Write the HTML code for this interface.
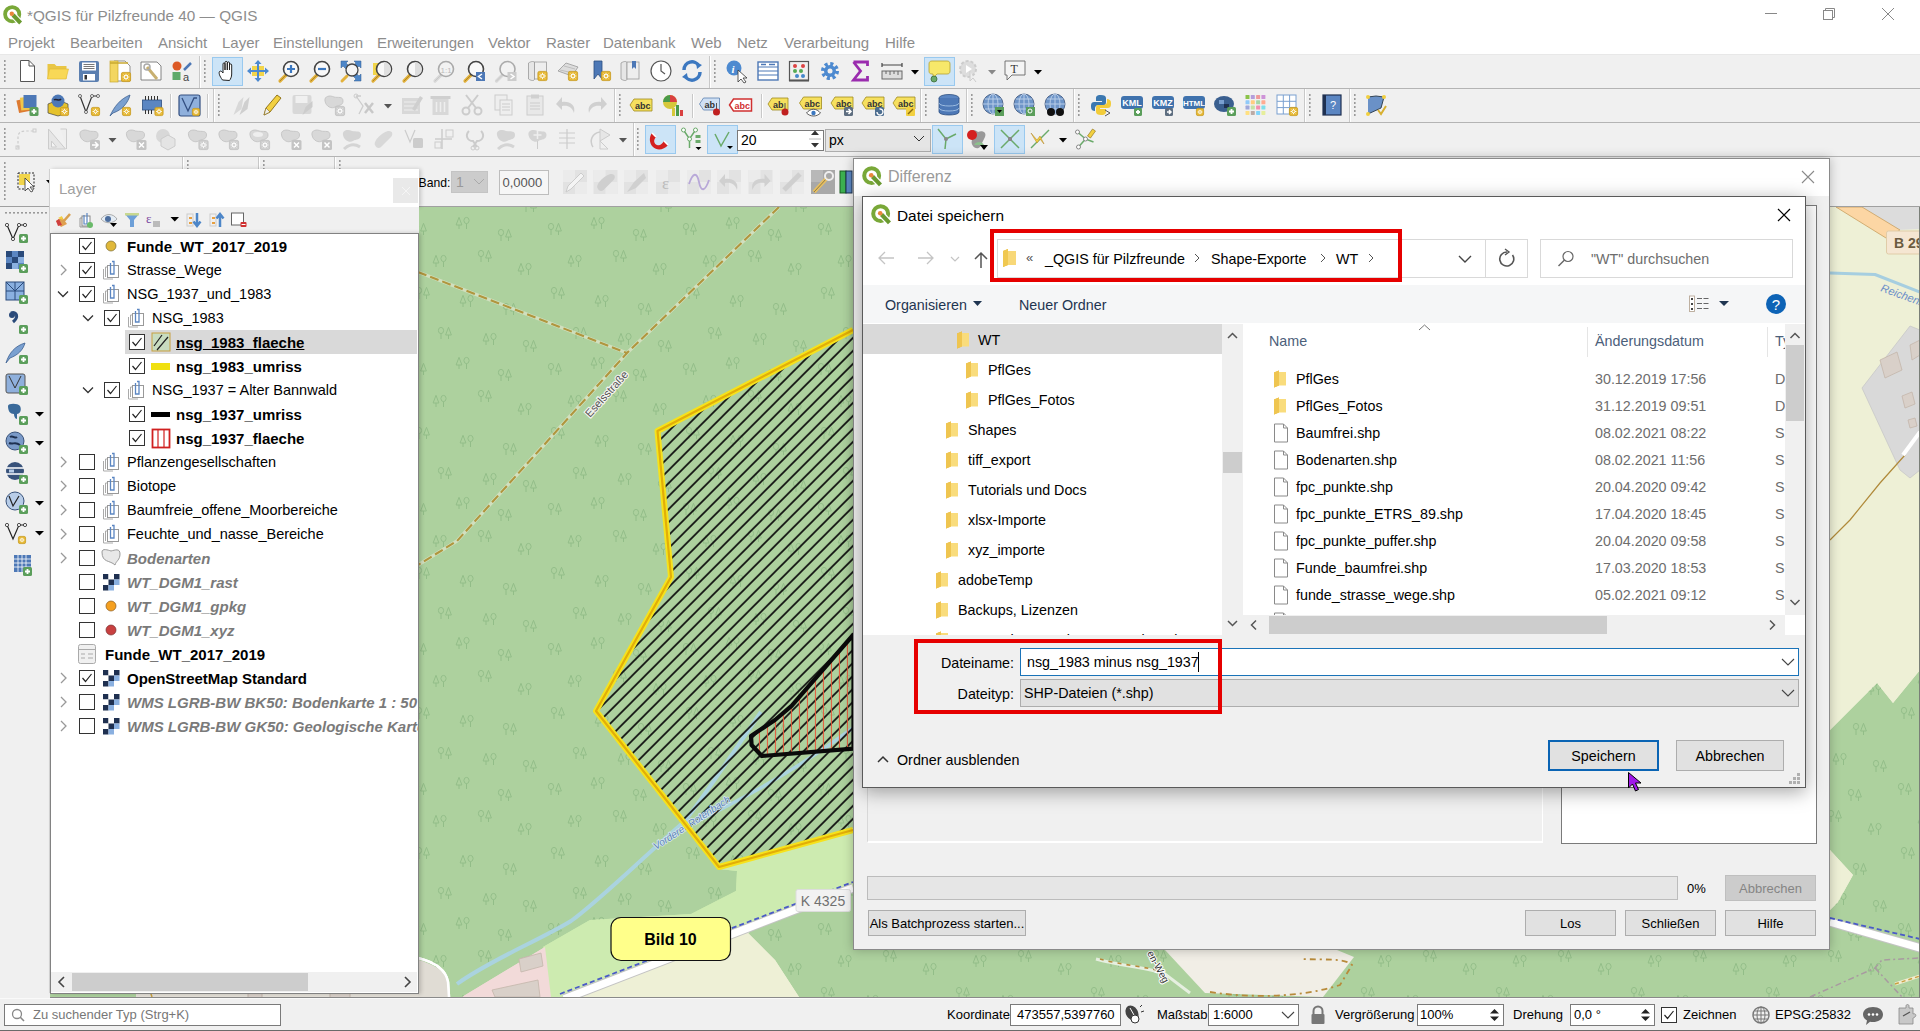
<!DOCTYPE html><html><head><meta charset="utf-8"><style>
html,body{margin:0;padding:0;} body{width:1920px;height:1031px;position:relative;overflow:hidden;background:#f0f0f0;font-family:"Liberation Sans", sans-serif;}
</style></head><body>
<div style="position:absolute;left:0px;top:0px;width:1920px;height:54px;background:#fff;"></div>
<svg style="position:absolute;left:3px;top:5px;" width="20" height="20" viewBox="0 0 20 20"><circle cx="9.200000000000001" cy="9.200000000000001" r="7.1" fill="none" stroke="#79a838" stroke-width="3.8"/><path d="M10.4 10.4 L17.2 17.6" stroke="#fff" stroke-width="6.4" stroke-linecap="butt"/><path d="M10.0 10.0 L17.6 18.0" stroke="#6a9a30" stroke-width="4.0" stroke-linecap="butt"/><circle cx="8.8" cy="8.8" r="2.2" fill="#e8863a"/></svg>
<div style="position:absolute;top:5.5px;font-size:15.3px;line-height:19px;color:#8d8d8d;white-space:nowrap;left:27px;">*QGIS für Pilzfreunde 40 — QGIS</div>
<svg style="position:absolute;left:1760px;top:0px;" width="160" height="30" viewBox="0 0 160 30"><path d="M5 13.5 H17" stroke="#888" stroke-width="1"/><rect x="63.5" y="10.5" width="9" height="9" fill="none" stroke="#888"/><path d="M65.5 10.5 V8.5 H74.5 V17.5 H72.5" fill="none" stroke="#888"/><path d="M122 8 L134 20 M134 8 L122 20" stroke="#888" stroke-width="1"/></svg>
<div style="position:absolute;top:32.5px;font-size:15px;line-height:19px;color:#8d8d8d;white-space:nowrap;left:8px;">Projekt</div>
<div style="position:absolute;top:32.5px;font-size:15px;line-height:19px;color:#8d8d8d;white-space:nowrap;left:70px;">Bearbeiten</div>
<div style="position:absolute;top:32.5px;font-size:15px;line-height:19px;color:#8d8d8d;white-space:nowrap;left:158px;">Ansicht</div>
<div style="position:absolute;top:32.5px;font-size:15px;line-height:19px;color:#8d8d8d;white-space:nowrap;left:222px;">Layer</div>
<div style="position:absolute;top:32.5px;font-size:15px;line-height:19px;color:#8d8d8d;white-space:nowrap;left:273px;">Einstellungen</div>
<div style="position:absolute;top:32.5px;font-size:15px;line-height:19px;color:#8d8d8d;white-space:nowrap;left:377px;">Erweiterungen</div>
<div style="position:absolute;top:32.5px;font-size:15px;line-height:19px;color:#8d8d8d;white-space:nowrap;left:488px;">Vektor</div>
<div style="position:absolute;top:32.5px;font-size:15px;line-height:19px;color:#8d8d8d;white-space:nowrap;left:546px;">Raster</div>
<div style="position:absolute;top:32.5px;font-size:15px;line-height:19px;color:#8d8d8d;white-space:nowrap;left:603px;">Datenbank</div>
<div style="position:absolute;top:32.5px;font-size:15px;line-height:19px;color:#8d8d8d;white-space:nowrap;left:691px;">Web</div>
<div style="position:absolute;top:32.5px;font-size:15px;line-height:19px;color:#8d8d8d;white-space:nowrap;left:737px;">Netz</div>
<div style="position:absolute;top:32.5px;font-size:15px;line-height:19px;color:#8d8d8d;white-space:nowrap;left:784px;">Verarbeitung</div>
<div style="position:absolute;top:32.5px;font-size:15px;line-height:19px;color:#8d8d8d;white-space:nowrap;left:885px;">Hilfe</div>
<div style="position:absolute;left:0px;top:54px;width:1920px;height:1px;background:#e8e8e8;"></div>
<div style="position:absolute;left:0px;top:88px;width:1920px;height:1px;background:#b4b4b4;"></div>
<div style="position:absolute;left:0px;top:122px;width:1920px;height:1px;background:#b4b4b4;"></div>
<div style="position:absolute;left:0px;top:156px;width:1920px;height:1px;background:#b4b4b4;"></div>
<div style="position:absolute;left:0px;top:206px;width:1920px;height:1px;background:#a0a0a0;"></div>
<svg style="position:absolute;left:0;top:0" width="1920" height="207" viewBox="0 0 1920 207"><rect x="4" y="60" width="1.6" height="2" fill="#9a9a9a"/><rect x="4" y="64" width="1.6" height="2" fill="#9a9a9a"/><rect x="4" y="68" width="1.6" height="2" fill="#9a9a9a"/><rect x="4" y="72" width="1.6" height="2" fill="#9a9a9a"/><rect x="4" y="76" width="1.6" height="2" fill="#9a9a9a"/><rect x="4" y="80" width="1.6" height="2" fill="#9a9a9a"/><g transform="translate(15,59) scale(1.0)"><path d="M5.5 1.5 H14 L19.5 7 V22.5 H5.5 Z" fill="#fff" stroke="#555"/><path d="M14 1.5 V7 H19.5" fill="none" stroke="#555"/></g><g transform="translate(45.5,59) scale(1.0)"><path d="M2 5 H9 L11 7 H21 V20 H2 Z" fill="#e9c645"/><path d="M4 10 H23 L20.5 20 H2 Z" fill="#f8d857" stroke="#e0b830" stroke-width="0.6"/></g><g transform="translate(77,59) scale(1.0)"><rect x="2" y="2" width="20" height="21" rx="2" fill="#5b7fb0"/><rect x="5" y="3.5" width="14" height="8" fill="#fff"/><path d="M6.5 5.5 H17.5 M6.5 7.5 H17.5 M6.5 9.5 H17.5" stroke="#555" stroke-width="0.8"/><rect x="6" y="15" width="12" height="6.5" fill="#fff"/><rect x="7.5" y="16" width="2.5" height="4.5" fill="#333"/></g><g transform="translate(108,59) scale(1.0)"><path d="M6 2 H17 L22 7 V22 H6 Z" fill="#fff" stroke="#777" stroke-width="0.8"/><rect x="2" y="2" width="8" height="21" fill="#f3d660" stroke="#c8a830" stroke-width="0.7"/><path d="M2 4 H20" stroke="#c8a830" stroke-width="1.5"/><rect x="13.4" y="13.4" width="9.2" height="9.2" rx="1.5" fill="#e6b833" stroke="#c89a20" stroke-width="0.8"/><path d="M18.0 14.8 V21.2 M14.6 18.0 H21.4 M15.7 15.7 L20.3 20.3 M20.3 15.7 L15.7 20.3" stroke="#fff" stroke-width="0.9"/><circle cx="18.0" cy="18.0" r="1.6" fill="#e6b833"/><circle cx="18.0" cy="18.0" r="1.6" fill="none" stroke="#fff" stroke-width="0.8"/></g><g transform="translate(139,59) scale(1.0)"><path d="M2 3 H18 L22 7 V21 H2 Z" fill="#fff" stroke="#777" stroke-width="0.9"/><path d="M8 8 L18 20" stroke="#c8b070" stroke-width="3"/><circle cx="8" cy="8" r="3" fill="none" stroke="#aaa" stroke-width="1.5"/></g><g transform="translate(170,59) scale(1.0)"><circle cx="7" cy="7" r="4.5" fill="#dd5a25"/><rect x="2.5" y="13" width="8" height="8" fill="#5eaa6a"/><path d="M14 11 L21 4" stroke="#4d78b6" stroke-width="2.5"/><text x="13" y="22" font-size="11" font-family="Liberation Sans" fill="#444">a</text></g><rect x="199" y="56" width="1" height="32" fill="#c8c8c8"/><rect x="200" y="56" width="1" height="32" fill="#fff"/><rect x="204" y="60" width="1.6" height="2" fill="#9a9a9a"/><rect x="204" y="64" width="1.6" height="2" fill="#9a9a9a"/><rect x="204" y="68" width="1.6" height="2" fill="#9a9a9a"/><rect x="204" y="72" width="1.6" height="2" fill="#9a9a9a"/><rect x="204" y="76" width="1.6" height="2" fill="#9a9a9a"/><rect x="204" y="80" width="1.6" height="2" fill="#9a9a9a"/><rect x="212.5" y="57.5" width="30" height="28" fill="#cce4f7" stroke="#99c9ef"/><g transform="translate(215.5,59) scale(1.0)"><path d="M7 21 C4 17 3 14 4 12.5 C5 11.5 6.5 12.5 7.5 14 V5 C7.5 3.5 9.5 3.5 9.5 5 V11 V3.5 C9.5 2 11.8 2 11.8 3.5 V11 V4 C11.8 2.5 14 2.5 14 4 V11 V6 C14 4.6 16.2 4.6 16.2 6 V15 C16.2 18 15 20 14 21.5 Z" fill="#fff" stroke="#222" stroke-width="1"/></g><g transform="translate(246,59) scale(1.0)"><rect x="6" y="7" width="12" height="10" fill="#f2d54a"/><path d="M12 1 L15.5 5 H8.5 Z M12 23 L15.5 19 H8.5 Z M1 12 L5 8.5 V15.5 Z M23 12 L19 8.5 V15.5 Z" fill="#4d8ad0"/><path d="M12 4 V20 M4 12 H20" stroke="#4d8ad0" stroke-width="2"/></g><g transform="translate(277,59) scale(1.0)"><path d="M3 22 L9 16" stroke="#e3b23c" stroke-width="3.2" stroke-linecap="round"/><path d="M3 22 L9 16" stroke="#8a6a1a" stroke-width="0.6" stroke-linecap="round" fill="none"/><circle cx="14" cy="10" r="7.5" fill="#f8f8f8" stroke="#444" stroke-width="1.6"/><path d="M14 6 V14 M10 10 H18" stroke="#3c78c0" stroke-width="2.2"/></g><g transform="translate(308,59) scale(1.0)"><path d="M3 22 L9 16" stroke="#e3b23c" stroke-width="3.2" stroke-linecap="round"/><path d="M3 22 L9 16" stroke="#8a6a1a" stroke-width="0.6" stroke-linecap="round" fill="none"/><circle cx="14" cy="10" r="7.5" fill="#f8f8f8" stroke="#444" stroke-width="1.6"/><path d="M10 10 H18" stroke="#3c78c0" stroke-width="2.2"/></g><g transform="translate(339,59) scale(1.0)"><path d="M2 2 H9 L7 4 L10 7 L7 10 L4 7 L2 9 Z M22 2 V9 L20 7 L17 10 L14 7 L17 4 L15 2 Z M22 22 H15 L17 20 L14 17 L17 14 L20 17 L22 15 Z" fill="#4d86c8" stroke="#2d5a90" stroke-width="0.5"/><path d="M3 22 L8 17" stroke="#e3b23c" stroke-width="3" stroke-linecap="round"/><circle cx="13" cy="11" r="6" fill="#f4f4f4" stroke="#444" stroke-width="1.3"/></g><g transform="translate(370,59) scale(1.0)"><rect x="3" y="4" width="11" height="12" fill="#f2d54a"/><path d="M3 22 L9 16" stroke="#e3b23c" stroke-width="3.2" stroke-linecap="round"/><path d="M3 22 L9 16" stroke="#8a6a1a" stroke-width="0.6" stroke-linecap="round" fill="none"/><circle cx="14" cy="10" r="7.5" fill="#f8f8f8" stroke="#444" stroke-width="1.6"/><path d="M14 3 A7 7 0 0 1 14 17" fill="#e0e0e0"/></g><g transform="translate(401,59) scale(1.0)"><path d="M3 22 L9 16" stroke="#e3b23c" stroke-width="3.2" stroke-linecap="round"/><path d="M3 22 L9 16" stroke="#8a6a1a" stroke-width="0.6" stroke-linecap="round" fill="none"/><circle cx="14" cy="10" r="7.5" fill="#f8f8f8" stroke="#444" stroke-width="1.6"/><path d="M14 3 A7 7 0 0 1 14 17" fill="#ddd"/></g><g transform="translate(432,59) scale(1.0)"><path d="M3 22 L9 16" stroke="#d8d8d8" stroke-width="3.2" stroke-linecap="round"/><path d="M3 22 L9 16" stroke="#bbb" stroke-width="0.6" stroke-linecap="round" fill="none"/><circle cx="14" cy="10" r="7.5" fill="#f2f2f2" stroke="#aaa" stroke-width="1.6"/><text x="8.5" y="13.5" font-size="8" font-family="Liberation Sans" fill="#bbb">1:1</text></g><g transform="translate(462,59) scale(1.0)"><path d="M3 22 L9 16" stroke="#e3b23c" stroke-width="3.2" stroke-linecap="round"/><path d="M3 22 L9 16" stroke="#8a6a1a" stroke-width="0.6" stroke-linecap="round" fill="none"/><circle cx="14" cy="10" r="7.5" fill="#f8f8f8" stroke="#444" stroke-width="1.6"/><rect x="14" y="13" width="9" height="9" fill="#4d78b6"/><path d="M20 15 L16.5 17.5 L20 20" stroke="#fff" stroke-width="1.5" fill="none"/></g><g transform="translate(493.5,59) scale(1.0)"><path d="M3 22 L9 16" stroke="#d8d8d8" stroke-width="3.2" stroke-linecap="round"/><path d="M3 22 L9 16" stroke="#bbb" stroke-width="0.6" stroke-linecap="round" fill="none"/><circle cx="14" cy="10" r="7.5" fill="#f2f2f2" stroke="#aaa" stroke-width="1.6"/><rect x="14" y="13" width="9" height="9" fill="#ccc"/><path d="M17 15 L20.5 17.5 L17 20" stroke="#fff" stroke-width="1.5" fill="none"/></g><g transform="translate(525.5,59) scale(1.0)"><path d="M3 4 C6 2 9 2 9 4 V20 C9 22 6 22 3 20 Z" fill="#e6e6e6" stroke="#999" stroke-width="0.8"/><rect x="9" y="3" width="12" height="17" fill="#eee" stroke="#999" stroke-width="0.8"/><rect x="12.4" y="12.4" width="9.2" height="9.2" rx="1.5" fill="#e6b833" stroke="#c89a20" stroke-width="0.8"/><path d="M17.0 13.8 V20.2 M13.6 17.0 H20.4 M14.7 14.7 L19.3 19.3 M19.3 14.7 L14.7 19.3" stroke="#fff" stroke-width="0.9"/><circle cx="17.0" cy="17.0" r="1.6" fill="#e6b833"/><circle cx="17.0" cy="17.0" r="1.6" fill="none" stroke="#fff" stroke-width="0.8"/></g><g transform="translate(556,59) scale(1.0)"><path d="M2 12 L10 4 L22 8 L16 17 Z" fill="#ddd" stroke="#999" stroke-width="0.8"/><path d="M4 11 L17 14 M8 7 L19 10" stroke="#aaa" stroke-width="0.6"/><rect x="12.4" y="12.4" width="9.2" height="9.2" rx="1.5" fill="#e6b833" stroke="#c89a20" stroke-width="0.8"/><path d="M17.0 13.8 V20.2 M13.6 17.0 H20.4 M14.7 14.7 L19.3 19.3 M19.3 14.7 L14.7 19.3" stroke="#fff" stroke-width="0.9"/><circle cx="17.0" cy="17.0" r="1.6" fill="#e6b833"/><circle cx="17.0" cy="17.0" r="1.6" fill="none" stroke="#fff" stroke-width="0.8"/></g><g transform="translate(589,59) scale(1.0)"><path d="M5 2 H13 V20 L9 15 L5 20 Z" fill="#4d78b6" stroke="#2c4f80" stroke-width="0.8"/><rect x="12.4" y="12.4" width="9.2" height="9.2" rx="1.5" fill="#e6b833" stroke="#c89a20" stroke-width="0.8"/><path d="M17.0 13.8 V20.2 M13.6 17.0 H20.4 M14.7 14.7 L19.3 19.3 M19.3 14.7 L14.7 19.3" stroke="#fff" stroke-width="0.9"/><circle cx="17.0" cy="17.0" r="1.6" fill="#e6b833"/><circle cx="17.0" cy="17.0" r="1.6" fill="none" stroke="#fff" stroke-width="0.8"/></g><g transform="translate(618,59) scale(1.0)"><path d="M3 4 C6 2 9 2 9 4 V20 C9 22 6 22 3 20 Z" fill="#e6e6e6" stroke="#999" stroke-width="0.8"/><rect x="9" y="3" width="12" height="17" fill="#eee" stroke="#999" stroke-width="0.8"/><path d="M14 2 H18 V10 L16 8 L14 10 Z" fill="#4d78b6"/></g><g transform="translate(649,59) scale(1.0)"><circle cx="12" cy="12" r="10" fill="#fff" stroke="#555" stroke-width="1.2"/><path d="M12 5 V12 L16 15" stroke="#555" stroke-width="1.2" fill="none"/></g><g transform="translate(680,59) scale(1.0)"><path d="M4 11 A8 8 0 0 1 19 7" stroke="#3c78c0" stroke-width="3.5" fill="none"/><path d="M20 13 A8 8 0 0 1 5 17" stroke="#3c78c0" stroke-width="3.5" fill="none"/><path d="M16 3 L22 6 L17 10 Z M8 21 L2 18 L7 14 Z" fill="#3c78c0"/></g><rect x="709" y="56" width="1" height="32" fill="#c8c8c8"/><rect x="710" y="56" width="1" height="32" fill="#fff"/><rect x="714" y="60" width="1.6" height="2" fill="#9a9a9a"/><rect x="714" y="64" width="1.6" height="2" fill="#9a9a9a"/><rect x="714" y="68" width="1.6" height="2" fill="#9a9a9a"/><rect x="714" y="72" width="1.6" height="2" fill="#9a9a9a"/><rect x="714" y="76" width="1.6" height="2" fill="#9a9a9a"/><rect x="714" y="80" width="1.6" height="2" fill="#9a9a9a"/><rect x="924.5" y="57.5" width="30" height="28" fill="#cce4f7" stroke="#99c9ef"/><g transform="translate(725,59) scale(1.0)"><circle cx="9" cy="9" r="7.5" fill="#4d8ad0"/><text x="6.5" y="13.5" font-size="11" font-weight="bold" font-style="italic" font-family="Liberation Serif" fill="#fff">i</text><path d="M13 11 L13 23 L16 20 L19 24 L21 23 L18 19 L22 19 Z" fill="#fff" stroke="#333" stroke-width="0.8"/></g><g transform="translate(756,59) scale(1.0)"><rect x="2" y="3" width="20" height="18" fill="#fff" stroke="#4d78b6" stroke-width="1.4"/><path d="M2 8 H22 M2 12 H22 M2 16 H22" stroke="#4d78b6" stroke-width="1"/><path d="M5 5.5 H10 M13 5.5 H19" stroke="#4d78b6" stroke-width="1.5"/></g><g transform="translate(787,59) scale(1.0)"><rect x="2.5" y="2.5" width="19" height="19" fill="none" stroke="#555" stroke-width="1.2"/><path d="M2 21.5 H22" stroke="#555" stroke-width="2"/><circle cx="8" cy="7" r="2" fill="#d44"/><circle cx="16" cy="7" r="2" fill="#d44"/><circle cx="8" cy="12" r="2" fill="#5a5"/><circle cx="14" cy="12" r="2" fill="#5a5"/><circle cx="10" cy="17" r="2" fill="#48c"/><circle cx="16" cy="17" r="2" fill="#48c"/></g><g transform="translate(818,59) scale(1.0)"><circle cx="12" cy="12" r="7" fill="none" stroke="#4d8ad0" stroke-width="4" stroke-dasharray="3 2.5"/><circle cx="12" cy="12" r="6" fill="#4d8ad0"/><circle cx="12" cy="12" r="2.5" fill="#f0f0f0"/></g><g transform="translate(848.5,59) scale(1.0)"><path d="M5 3 H19 V7 M19 3 M5 3 L12 12 L5 21 H19 V17" stroke="#9a2cae" stroke-width="2.8" fill="none"/></g><g transform="translate(880,59) scale(1.0)"><path d="M2 6 H22 M2 4 V8 M22 4 V8" stroke="#444" stroke-width="1.2"/><rect x="2" y="12" width="20" height="8" fill="#ddd" stroke="#666" stroke-width="1"/><path d="M6 12 V15 M10 12 V16 M14 12 V15 M18 12 V16" stroke="#666"/></g><g transform="translate(927,59) scale(1.0)"><path d="M2 5 C2 3 3 2 5 2 H20 C22 2 23 3 23 5 V12 C23 14 22 15 20 15 H10 L6 19 V15 H5 C3 15 2 14 2 12 Z" fill="#f7e86a" stroke="#b6a130" stroke-width="0.8"/><circle cx="7" cy="20" r="3" fill="#6aaa6a" stroke="#3a6a3a" stroke-width="0.8"/></g><g transform="translate(958,59) scale(1.0)"><circle cx="10" cy="10" r="8" fill="#ddd" stroke="#ccc" stroke-width="2" stroke-dasharray="3 2"/><path d="M8 6 L14 10 L8 14 Z" fill="#fff"/><path d="M12 12 L12 22 L15 19 L18 23" stroke="#ccc" fill="#eee"/></g><g transform="translate(1003,59) scale(1.0)"><path d="M2 2 H22 V16 H9 L4 21 V16 H2 Z" fill="#f4f4f4" stroke="#666" stroke-width="0.9"/><text x="7.5" y="13.5" font-size="12" font-family="Liberation Serif" fill="#333">T</text></g><path d="M911 70 H919 L915 74.5 Z" fill="#000"/><path d="M988 70 H996 L992 74.5 Z" fill="#888"/><path d="M1034 70 H1042 L1038 74.5 Z" fill="#000"/><rect x="4" y="94" width="1.6" height="2" fill="#9a9a9a"/><rect x="4" y="98" width="1.6" height="2" fill="#9a9a9a"/><rect x="4" y="102" width="1.6" height="2" fill="#9a9a9a"/><rect x="4" y="106" width="1.6" height="2" fill="#9a9a9a"/><rect x="4" y="110" width="1.6" height="2" fill="#9a9a9a"/><rect x="4" y="114" width="1.6" height="2" fill="#9a9a9a"/><g transform="translate(15.5,93) scale(1.0)"><rect x="2" y="6" width="13" height="13" fill="#dd7a30" transform="rotate(-12 8 12)"/><rect x="5" y="4" width="13" height="13" fill="#f0c64a" transform="rotate(-6 11 10)"/><rect x="8" y="2" width="13" height="13" fill="#4d78b6"/><rect x="14" y="14" width="9" height="9" rx="1.5" fill="#5b9e5b"/><path d="M18.5 16 V21 M16 18.5 H21" stroke="#fff" stroke-width="1.8"/></g><g transform="translate(46,93) scale(1.0)"><path d="M2 11 L12 7 L22 11 V20 L12 23 L2 20 Z" fill="#e5c22c" stroke="#444" stroke-width="0.7"/><circle cx="12" cy="8" r="6.5" fill="#4d78b6"/><path d="M8 7 C10 5 13 9 15 6" stroke="#223" stroke-width="1.5" fill="none"/><rect x="14.4" y="14.4" width="8.2" height="8.2" rx="1.5" fill="#e6b833" stroke="#c89a20" stroke-width="0.8"/><path d="M18.5 15.8 V21.2 M15.6 18.5 H21.4 M16.7 16.7 L20.3 20.3 M20.3 16.7 L16.7 20.3" stroke="#fff" stroke-width="0.9"/><circle cx="18.5" cy="18.5" r="1.44" fill="#e6b833"/><circle cx="18.5" cy="18.5" r="1.44" fill="none" stroke="#fff" stroke-width="0.8"/></g><g transform="translate(77,93) scale(1.0)"><path d="M3 3 L9 19 L15 3 L21 3" stroke="#333" stroke-width="1.2" fill="none"/><circle cx="3" cy="3" r="1.5" fill="#fff" stroke="#333" stroke-width="0.7"/><circle cx="9" cy="19" r="1.5" fill="#fff" stroke="#333" stroke-width="0.7"/><circle cx="15" cy="3" r="1.5" fill="#fff" stroke="#333" stroke-width="0.7"/><circle cx="21" cy="3" r="1.5" fill="#fff" stroke="#333" stroke-width="0.7"/><rect x="14.4" y="14.4" width="8.2" height="8.2" rx="1.5" fill="#e6b833" stroke="#c89a20" stroke-width="0.8"/><path d="M18.5 15.8 V21.2 M15.6 18.5 H21.4 M16.7 16.7 L20.3 20.3 M20.3 16.7 L16.7 20.3" stroke="#fff" stroke-width="0.9"/><circle cx="18.5" cy="18.5" r="1.44" fill="#e6b833"/><circle cx="18.5" cy="18.5" r="1.44" fill="none" stroke="#fff" stroke-width="0.8"/></g><g transform="translate(108,93) scale(1.0)"><path d="M2 23 C6 14 12 6 22 2 C20 10 14 17 5 20 Z" fill="#7aa0d0" stroke="#3c5f90" stroke-width="0.8"/><rect x="14.4" y="14.4" width="8.2" height="8.2" rx="1.5" fill="#e6b833" stroke="#c89a20" stroke-width="0.8"/><path d="M18.5 15.8 V21.2 M15.6 18.5 H21.4 M16.7 16.7 L20.3 20.3 M20.3 16.7 L16.7 20.3" stroke="#fff" stroke-width="0.9"/><circle cx="18.5" cy="18.5" r="1.44" fill="#e6b833"/><circle cx="18.5" cy="18.5" r="1.44" fill="none" stroke="#fff" stroke-width="0.8"/></g><g transform="translate(140.5,93) scale(1.0)"><rect x="2" y="7" width="19" height="10" fill="#5b86c2" stroke="#2d4f80" stroke-width="0.8"/><path d="M5 3 V7 M8 3 V7 M11 3 V7 M14 3 V7 M17 3 V7 M5 17 V21 M8 17 V21 M11 17 V21" stroke="#333" stroke-width="1"/><rect x="14.4" y="14.4" width="8.2" height="8.2" rx="1.5" fill="#e6b833" stroke="#c89a20" stroke-width="0.8"/><path d="M18.5 15.8 V21.2 M15.6 18.5 H21.4 M16.7 16.7 L20.3 20.3 M20.3 16.7 L16.7 20.3" stroke="#fff" stroke-width="0.9"/><circle cx="18.5" cy="18.5" r="1.44" fill="#e6b833"/><circle cx="18.5" cy="18.5" r="1.44" fill="none" stroke="#fff" stroke-width="0.8"/></g><g transform="translate(177,93) scale(1.0)"><rect x="2" y="2" width="21" height="21" rx="2" fill="#8fb0dc" stroke="#334f80" stroke-width="1.2"/><path d="M5 5 L11 18 L17 5 L20 5" stroke="#334f80" stroke-width="1.3" fill="none"/><rect x="15.4" y="15.4" width="7.2" height="7.2" rx="1.5" fill="#e6b833" stroke="#c89a20" stroke-width="0.8"/><path d="M19.0 16.8 V21.2 M16.6 19.0 H21.4 M17.7 17.7 L20.3 20.3 M20.3 17.7 L17.7 20.3" stroke="#fff" stroke-width="0.9"/><circle cx="19.0" cy="19.0" r="1.28" fill="#e6b833"/><circle cx="19.0" cy="19.0" r="1.28" fill="none" stroke="#fff" stroke-width="0.8"/></g><rect x="170" y="94" width="1" height="24" fill="#c8c8c8"/><rect x="171" y="94" width="1" height="24" fill="#fff"/><rect x="207" y="94" width="1" height="24" fill="#c8c8c8"/><rect x="208" y="94" width="1" height="24" fill="#fff"/><rect x="213" y="89" width="1" height="33" fill="#c8c8c8"/><rect x="214" y="89" width="1" height="33" fill="#fff"/><rect x="218" y="94" width="1.6" height="2" fill="#9a9a9a"/><rect x="218" y="98" width="1.6" height="2" fill="#9a9a9a"/><rect x="218" y="102" width="1.6" height="2" fill="#9a9a9a"/><rect x="218" y="106" width="1.6" height="2" fill="#9a9a9a"/><rect x="218" y="110" width="1.6" height="2" fill="#9a9a9a"/><rect x="218" y="114" width="1.6" height="2" fill="#9a9a9a"/><g transform="translate(230.5,93) scale(1.0)"><path d="M3 22 L8 9 L13 4 L11 16 Z" fill="#d8d8d8"/><path d="M9 22 L14 9 L19 4 L17 16 Z" fill="#cfcfcf"/></g><g transform="translate(260,93) scale(1.0)"><path d="M4 22 L6 15 L17 2 L21 5 L10 19 Z" fill="#f2d040" stroke="#886a10" stroke-width="0.9"/><path d="M4 22 L6 15 L10 19 Z" fill="#eee" stroke="#886a10" stroke-width="0.6"/></g><g transform="translate(290.5,93) scale(1.0)"><rect x="2" y="2" width="19" height="19" rx="2" fill="#d8d8d8"/><rect x="5" y="3" width="12" height="7" fill="#f0f0f0"/><path d="M12 22 L15 14 L22 8 L22 14 Z" fill="#ccc"/></g><g transform="translate(322,93) scale(1.0)"><path d="M3 8 C2 3 8 2 12 4 C16 5 21 3 21 8 C21 13 16 12 13 14 C10 16 4 14 3 8 Z" fill="#d8d8d8" stroke="#c4c4c4" stroke-width="0.9"/><rect x="13.4" y="13.4" width="9.2" height="9.2" rx="1.5" fill="#cfcfcf" stroke="#c0c0c0" stroke-width="0.8"/><path d="M18.0 14.8 V21.2 M14.6 18.0 H21.4 M15.7 15.7 L20.3 20.3 M20.3 15.7 L15.7 20.3" stroke="#fff" stroke-width="0.9"/><circle cx="18.0" cy="18.0" r="1.6" fill="#cfcfcf"/><circle cx="18.0" cy="18.0" r="1.6" fill="none" stroke="#fff" stroke-width="0.8"/></g><g transform="translate(353,93) scale(1.0)"><path d="M3 3 L10 13 L6 21 M3 3 H8" stroke="#ccc" stroke-width="1.3" fill="none"/><circle cx="3" cy="3" r="2" fill="none" stroke="#ccc"/><path d="M12 10 L20 20 M20 10 L12 20" stroke="#c8c8c8" stroke-width="2.5"/></g><g transform="translate(400,93) scale(1.0)"><rect x="2" y="5" width="18" height="16" fill="#d8d8d8"/><path d="M4 9 H18 M4 13 H18 M4 17 H18" stroke="#eee"/><path d="M12 16 L20 3 L23 5 L15 18 Z" fill="#cfcfcf"/></g><g transform="translate(428.5,93) scale(1.0)"><rect x="4" y="6" width="16" height="16" fill="#d8d8d8"/><rect x="2" y="3" width="20" height="3" fill="#cfcfcf"/><path d="M8 9 V19 M12 9 V19 M16 9 V19" stroke="#eee" stroke-width="1.5"/></g><g transform="translate(460,93) scale(1.0)"><circle cx="6" cy="18" r="3.5" fill="none" stroke="#ccc" stroke-width="2"/><circle cx="18" cy="18" r="3.5" fill="none" stroke="#ccc" stroke-width="2"/><path d="M8 15 L18 2 M16 15 L6 2" stroke="#ccc" stroke-width="2"/></g><g transform="translate(492,93) scale(1.0)"><rect x="3" y="2" width="12" height="15" fill="#eee" stroke="#ccc"/><rect x="8" y="7" width="12" height="15" fill="#eee" stroke="#ccc"/><path d="M10 11 H18 M10 14 H18 M10 17 H18" stroke="#ccc"/></g><g transform="translate(523,93) scale(1.0)"><rect x="4" y="3" width="16" height="19" fill="#e8e8e8" stroke="#ccc"/><rect x="8" y="1.5" width="8" height="4" fill="#d0d0d0"/><path d="M7 10 H17 M7 13 H17 M7 16 H17" stroke="#ccc"/></g><g transform="translate(554,93) scale(1.0)"><path d="M20 20 C22 12 16 8 8 9 V4 L2 11 L8 17 V13 C14 12 18 14 20 20 Z" fill="#d0d0d0"/></g><g transform="translate(585,93) scale(1.0)"><path d="M4 20 C2 12 8 8 16 9 V4 L22 11 L16 17 V13 C10 12 6 14 4 20 Z" fill="#d0d0d0"/></g><path d="M384 104 H392 L388 108.5 Z" fill="#555"/><rect x="614" y="89" width="1" height="33" fill="#c8c8c8"/><rect x="615" y="89" width="1" height="33" fill="#fff"/><rect x="619" y="94" width="1.6" height="2" fill="#9a9a9a"/><rect x="619" y="98" width="1.6" height="2" fill="#9a9a9a"/><rect x="619" y="102" width="1.6" height="2" fill="#9a9a9a"/><rect x="619" y="106" width="1.6" height="2" fill="#9a9a9a"/><rect x="619" y="110" width="1.6" height="2" fill="#9a9a9a"/><rect x="619" y="114" width="1.6" height="2" fill="#9a9a9a"/><g transform="translate(629,93) scale(1.0)"><path d="M1 12 L5 6 H23 V18 H5 Z" fill="#f6e05e" stroke="#a08a20" stroke-width="0.8"/><text x="6" y="15.5" font-size="9" font-weight="bold" font-family="Liberation Sans" fill="#333">abc</text></g><g transform="translate(661,93) scale(1.0)"><circle cx="9" cy="9" r="7" fill="#d6c83a"/><path d="M9 9 L9 2 A7 7 0 0 1 16 9 Z" fill="#d94040"/><path d="M9 9 L2 9 A7 7 0 0 1 9 2 Z" fill="#4a9a4a"/><rect x="11" y="15" width="3" height="8" fill="#d6c83a"/><rect x="15" y="12" width="3" height="11" fill="#4a9a4a"/><rect x="19" y="17" width="3" height="6" fill="#d94040"/></g><g transform="translate(698.5,93) scale(1.0)"><path d="M1 11 L5 5 H21 V17 H5 Z" fill="#cfe0f4" stroke="#5a80b0" stroke-width="0.8"/><text x="6" y="14.5" font-size="9" font-weight="bold" font-family="Liberation Sans" fill="#333">ab</text><path d="M18 10 V17" stroke="#555"/><circle cx="18" cy="19" r="3.5" fill="#c02020"/></g><g transform="translate(728.5,93) scale(1.0)"><path d="M1 12 L5 6 H23 V18 H5 Z" fill="#fff" stroke="#d03030" stroke-width="1.5"/><text x="6" y="15.5" font-size="9" font-weight="bold" font-family="Liberation Sans" fill="#d03030">abc</text></g><g transform="translate(767,93) scale(1.0)"><path d="M1 11 L5 5 H21 V17 H5 Z" fill="#f6e05e" stroke="#a08a20" stroke-width="0.8"/><text x="6" y="14.5" font-size="9" font-weight="bold" font-family="Liberation Sans" fill="#333">ab</text><path d="M18 10 V17" stroke="#555"/><circle cx="18" cy="19" r="3.5" fill="#c02020"/></g><g transform="translate(798.5,93) scale(1.0)"><path d="M1 10 L5 4 H23 V16 H5 Z" fill="#f6e05e" stroke="#a08a20" stroke-width="0.8"/><text x="6" y="13.5" font-size="9" font-weight="bold" font-family="Liberation Sans" fill="#333">abc</text><path d="M8 20 C12 15 18 15 22 20 C18 24 12 24 8 20 Z" fill="#fff" stroke="#333" stroke-width="0.8"/><circle cx="15" cy="20" r="2.2" fill="#3c78c0"/></g><g transform="translate(830,93) scale(1.0)"><path d="M1 10 L5 4 H23 V16 H5 Z" fill="#f6e05e" stroke="#a08a20" stroke-width="0.8"/><text x="6" y="13.5" font-size="9" font-weight="bold" font-family="Liberation Sans" fill="#333">abc</text><rect x="14" y="14" width="9" height="9" rx="1.5" fill="#5e6e80"/><path d="M16 18.5 H21 M18.5 16 L21 18.5 L18.5 21" stroke="#fff" stroke-width="1.5" fill="none"/></g><g transform="translate(861,93) scale(1.0)"><path d="M1 10 L5 4 H23 V16 H5 Z" fill="#f6e05e" stroke="#a08a20" stroke-width="0.8"/><text x="6" y="13.5" font-size="9" font-weight="bold" font-family="Liberation Sans" fill="#333">abc</text><rect x="14" y="14" width="9" height="9" rx="1.5" fill="#4d6e90"/><path d="M16 19 A3 3 0 1 0 18.5 16" stroke="#fff" stroke-width="1.4" fill="none"/></g><g transform="translate(892,93) scale(1.0)"><path d="M1 10 L5 4 H23 V16 H5 Z" fill="#f6e05e" stroke="#a08a20" stroke-width="0.8"/><text x="6" y="13.5" font-size="9" font-weight="bold" font-family="Liberation Sans" fill="#333">abc</text><rect x="14" y="14" width="9" height="9" rx="1" fill="#f2d040"/><path d="M16 21 L21 16" stroke="#886a10" stroke-width="1.5"/></g><rect x="692" y="94" width="1" height="24" fill="#c8c8c8"/><rect x="693" y="94" width="1" height="24" fill="#fff"/><rect x="761" y="94" width="1" height="24" fill="#c8c8c8"/><rect x="762" y="94" width="1" height="24" fill="#fff"/><rect x="920" y="89" width="1" height="33" fill="#c8c8c8"/><rect x="921" y="89" width="1" height="33" fill="#fff"/><rect x="925" y="94" width="1.6" height="2" fill="#9a9a9a"/><rect x="925" y="98" width="1.6" height="2" fill="#9a9a9a"/><rect x="925" y="102" width="1.6" height="2" fill="#9a9a9a"/><rect x="925" y="106" width="1.6" height="2" fill="#9a9a9a"/><rect x="925" y="110" width="1.6" height="2" fill="#9a9a9a"/><rect x="925" y="114" width="1.6" height="2" fill="#9a9a9a"/><g transform="translate(937,93) scale(1.0)"><ellipse cx="12" cy="5" rx="10" ry="3.5" fill="#5b86c2" stroke="#2d4f80" stroke-width="0.8"/><path d="M2 5 V19 C2 23 22 23 22 19 V5" fill="#4d78b6" stroke="#2d4f80" stroke-width="0.8"/><path d="M2 10 C2 14 22 14 22 10 M2 15 C2 19 22 19 22 15" stroke="#9bbbe0" fill="none"/></g><rect x="966" y="89" width="1" height="33" fill="#c8c8c8"/><rect x="967" y="89" width="1" height="33" fill="#fff"/><rect x="971" y="94" width="1.6" height="2" fill="#9a9a9a"/><rect x="971" y="98" width="1.6" height="2" fill="#9a9a9a"/><rect x="971" y="102" width="1.6" height="2" fill="#9a9a9a"/><rect x="971" y="106" width="1.6" height="2" fill="#9a9a9a"/><rect x="971" y="110" width="1.6" height="2" fill="#9a9a9a"/><rect x="971" y="114" width="1.6" height="2" fill="#9a9a9a"/><g transform="translate(982,93) scale(1.0)"><circle cx="11" cy="11" r="10" fill="#6e95c8" stroke="#38527a" stroke-width="0.8"/><path d="M1 11 H21 M11 1 V21 M3 6 H19 M3 16 H19" stroke="#b8cde8" stroke-width="1"/><ellipse cx="11" cy="11" rx="5" ry="10" fill="none" stroke="#b8cde8"/><rect x="13" y="14" width="9" height="9" fill="#5b9e5b"/><path d="M15 17 L17.5 20 L20 17" fill="#000"/></g><g transform="translate(1013,93) scale(1.0)"><circle cx="11" cy="11" r="10" fill="#6e95c8" stroke="#38527a" stroke-width="0.8"/><path d="M1 11 H21 M11 1 V21 M3 6 H19 M3 16 H19" stroke="#b8cde8" stroke-width="1"/><ellipse cx="11" cy="11" rx="5" ry="10" fill="none" stroke="#b8cde8"/><rect x="13" y="14" width="9" height="9" fill="#5b9e5b"/><circle cx="17" cy="18" r="2" fill="none" stroke="#fff"/></g><g transform="translate(1044,93) scale(1.0)"><circle cx="11" cy="11" r="10" fill="#6e95c8" stroke="#38527a" stroke-width="0.8"/><path d="M1 11 H21 M11 1 V21 M3 6 H19 M3 16 H19" stroke="#b8cde8" stroke-width="1"/><ellipse cx="11" cy="11" rx="5" ry="10" fill="none" stroke="#b8cde8"/><circle cx="7" cy="19" r="4" fill="#111"/><circle cx="16" cy="19" r="4" fill="#111"/></g><rect x="1073" y="89" width="1" height="33" fill="#c8c8c8"/><rect x="1074" y="89" width="1" height="33" fill="#fff"/><rect x="1078" y="94" width="1.6" height="2" fill="#9a9a9a"/><rect x="1078" y="98" width="1.6" height="2" fill="#9a9a9a"/><rect x="1078" y="102" width="1.6" height="2" fill="#9a9a9a"/><rect x="1078" y="106" width="1.6" height="2" fill="#9a9a9a"/><rect x="1078" y="110" width="1.6" height="2" fill="#9a9a9a"/><rect x="1078" y="114" width="1.6" height="2" fill="#9a9a9a"/><g transform="translate(1089,93) scale(1.0)"><path d="M12 2 C7 2 7 4 7 6 V8 H13 V9 H5 C2 9 2 12 2 14 C2 17 4 18 6 18 V15 C6 13 8 12 10 12 H15 C17 12 17 10 17 8 V5 C17 3 15 2 12 2 Z" fill="#3b78b0"/><path d="M12 22 C17 22 17 20 17 18 V16 H11 V15 H19 C22 15 22 12 22 10 C22 7 20 6 18 6 V9 C18 11 16 12 14 12 H9 C7 12 7 14 7 16 V19 C7 21 9 22 12 22 Z" fill="#f2cc3a"/><path d="M16 17 L21 20 L16 23" stroke="#555" fill="none"/></g><g transform="translate(1120,93) scale(1.0)"><rect x="1" y="3" width="22" height="13" rx="3" fill="#3f72ad"/><text x="12" y="13" text-anchor="middle" font-size="9" font-weight="bold" font-family="Liberation Sans" fill="#fff">KML</text><rect x="14" y="15" width="8" height="8" rx="1.5" fill="#5b9e5b"/><path d="M18.0 17 V21 M16 19.0 H20" stroke="#fff" stroke-width="1.8"/></g><g transform="translate(1151,93) scale(1.0)"><rect x="1" y="3" width="22" height="13" rx="3" fill="#3f72ad"/><text x="12" y="13" text-anchor="middle" font-size="9" font-weight="bold" font-family="Liberation Sans" fill="#fff">KMZ</text><rect x="14" y="15" width="8" height="8" rx="1.5" fill="#5e6e80"/><path d="M16 19.0 H20 M18.0 17 L20 19.0 L18.0 21" stroke="#fff" stroke-width="1.5" fill="none"/></g><g transform="translate(1182,93) scale(1.0)"><rect x="1" y="3" width="22" height="13" rx="3" fill="#3f72ad"/><text x="12" y="13" text-anchor="middle" font-size="8" font-weight="bold" font-family="Liberation Sans" fill="#fff">HTML</text><rect x="14.4" y="15.4" width="7.2" height="7.2" rx="1.5" fill="#e6b833" stroke="#c89a20" stroke-width="0.8"/><path d="M18.0 16.8 V21.2 M15.6 19.0 H20.4 M16.7 17.7 L19.3 20.3 M19.3 17.7 L16.7 20.3" stroke="#fff" stroke-width="0.9"/><circle cx="18.0" cy="19.0" r="1.28" fill="#e6b833"/><circle cx="18.0" cy="19.0" r="1.28" fill="none" stroke="#fff" stroke-width="0.8"/></g><g transform="translate(1213,93) scale(1.0)"><ellipse cx="11" cy="11" rx="10" ry="8" fill="#3a5f8f"/><rect x="6" y="7" width="5" height="4" fill="#7aa0d0"/><rect x="11" y="11" width="5" height="4" fill="#1e3050"/><rect x="14" y="14" width="9" height="9" rx="1.5" fill="#5b9e5b"/><path d="M18.5 16 V21 M16 18.5 H21" stroke="#fff" stroke-width="1.8"/></g><g transform="translate(1243.5,93) scale(1.0)"><rect x="2.0" y="2.0" width="4" height="4" rx="0.6" fill="#8bc34a"/><rect x="7.3" y="2.0" width="4" height="4" rx="0.6" fill="#b39ddb"/><rect x="12.6" y="2.0" width="4" height="4" rx="0.6" fill="#ef9a9a"/><rect x="17.9" y="2.0" width="4" height="4" rx="0.6" fill="#ce93d8"/><rect x="2.0" y="7.3" width="4" height="4" rx="0.6" fill="#90caf9"/><rect x="7.3" y="7.3" width="4" height="4" rx="0.6" fill="#ffcc80"/><rect x="12.6" y="7.3" width="4" height="4" rx="0.6" fill="#a5d6a7"/><rect x="17.9" y="7.3" width="4" height="4" rx="0.6" fill="#ffab91"/><rect x="2.0" y="12.6" width="4" height="4" rx="0.6" fill="#9fa8da"/><rect x="7.3" y="12.6" width="4" height="4" rx="0.6" fill="#c5e1a5"/><rect x="12.6" y="12.6" width="4" height="4" rx="0.6" fill="#f48fb1"/><rect x="17.9" y="12.6" width="4" height="4" rx="0.6" fill="#80deea"/><rect x="2.0" y="17.9" width="4" height="4" rx="0.6" fill="#ffe082"/><rect x="7.3" y="17.9" width="4" height="4" rx="0.6" fill="#bcaaa4"/><rect x="12.6" y="17.9" width="4" height="4" rx="0.6" fill="#81d4fa"/><rect x="17.9" y="17.9" width="4" height="4" rx="0.6" fill="#e6ee9c"/></g><g transform="translate(1275,93) scale(1.0)"><rect x="2" y="2" width="19" height="19" fill="#fff" stroke="#7aa0d0" stroke-width="1"/><path d="M8.3 2 V21 M14.6 2 V21 M2 8.3 H21 M2 14.6 H21" stroke="#7aa0d0"/><rect x="14.4" y="14.4" width="8.2" height="8.2" rx="1.5" fill="#e6b833" stroke="#c89a20" stroke-width="0.8"/><path d="M18.5 15.8 V21.2 M15.6 18.5 H21.4 M16.7 16.7 L20.3 20.3 M20.3 16.7 L16.7 20.3" stroke="#fff" stroke-width="0.9"/><circle cx="18.5" cy="18.5" r="1.44" fill="#e6b833"/><circle cx="18.5" cy="18.5" r="1.44" fill="none" stroke="#fff" stroke-width="0.8"/></g><rect x="1304" y="89" width="1" height="33" fill="#c8c8c8"/><rect x="1305" y="89" width="1" height="33" fill="#fff"/><rect x="1309" y="94" width="1.6" height="2" fill="#9a9a9a"/><rect x="1309" y="98" width="1.6" height="2" fill="#9a9a9a"/><rect x="1309" y="102" width="1.6" height="2" fill="#9a9a9a"/><rect x="1309" y="106" width="1.6" height="2" fill="#9a9a9a"/><rect x="1309" y="110" width="1.6" height="2" fill="#9a9a9a"/><rect x="1309" y="114" width="1.6" height="2" fill="#9a9a9a"/><g transform="translate(1320,93) scale(1.0)"><rect x="3" y="2" width="18" height="20" fill="#5b86c2" stroke="#1e3050" stroke-width="1.2"/><rect x="3" y="2" width="3" height="20" fill="#1e3050"/><text x="10" y="16" font-size="11" font-family="Liberation Sans" fill="#fff">?</text></g><rect x="1349" y="89" width="1" height="33" fill="#c8c8c8"/><rect x="1350" y="89" width="1" height="33" fill="#fff"/><rect x="1354" y="94" width="1.6" height="2" fill="#9a9a9a"/><rect x="1354" y="98" width="1.6" height="2" fill="#9a9a9a"/><rect x="1354" y="102" width="1.6" height="2" fill="#9a9a9a"/><rect x="1354" y="106" width="1.6" height="2" fill="#9a9a9a"/><rect x="1354" y="110" width="1.6" height="2" fill="#9a9a9a"/><rect x="1354" y="114" width="1.6" height="2" fill="#9a9a9a"/><g transform="translate(1364,93) scale(1.0)"><path d="M4 4 L12 3 L20 4 L17 15 L4 21 Z" fill="#5b86c2" opacity="0.9"/><path d="M4 4 L12 3 L20 4 L17 15 L4 21" stroke="#345" fill="none"/><circle cx="4" cy="4" r="2" fill="#f2d040"/><circle cx="20" cy="4" r="2" fill="#f2d040"/><circle cx="4" cy="21" r="2" fill="#f2d040"/><path d="M14 17 L17 21 L22 13" stroke="#d8b030" stroke-width="2" fill="none"/></g><rect x="4" y="128" width="1.6" height="2" fill="#9a9a9a"/><rect x="4" y="132" width="1.6" height="2" fill="#9a9a9a"/><rect x="4" y="136" width="1.6" height="2" fill="#9a9a9a"/><rect x="4" y="140" width="1.6" height="2" fill="#9a9a9a"/><rect x="4" y="144" width="1.6" height="2" fill="#9a9a9a"/><rect x="4" y="148" width="1.6" height="2" fill="#9a9a9a"/><g transform="translate(14,127) scale(1.0)"><path d="M4 21 V10 C4 6 7 4 11 4 H20" stroke="#ccc" stroke-width="1.2" stroke-dasharray="2.5 2" fill="none"/><rect x="2" y="19" width="3" height="3" fill="none" stroke="#ccc"/><rect x="19" y="2" width="3" height="3" fill="none" stroke="#ccc"/></g><g transform="translate(45.5,127) scale(1.0)"><path d="M3 2 L20 22 H3 Z" fill="#e6e6e6" stroke="#ccc"/><path d="M15 2 H21 V22" stroke="#ccc" fill="#eee"/><path d="M6 14 L11 20 H6 Z" fill="#f4f4f4" stroke="#ccc"/></g><g transform="translate(77,127) scale(1.0)"><path d="M3 8 C2 3 8 2 12 4 C16 5 21 3 21 8 C21 13 16 12 13 14 C10 16 4 14 3 8 Z" fill="#d8d8d8" stroke="#c4c4c4" stroke-width="0.9"/><rect x="13" y="13" width="10" height="10" rx="1.5" fill="#c4c4c4"/><path d="M15 18.0 H21 M18.0 15 L21 18.0 L18.0 21" stroke="#fff" stroke-width="1.5" fill="none"/></g><g transform="translate(123.5,127) scale(1.0)"><path d="M3 8 C2 3 8 2 12 4 C16 5 21 3 21 8 C21 13 16 12 13 14 C10 16 4 14 3 8 Z" fill="#d8d8d8" stroke="#c4c4c4" stroke-width="0.9"/><rect x="13" y="13" width="10" height="10" rx="1.5" fill="#c4c4c4"/><path d="M15.5 15.5 L20.5 20.5 M20.5 15.5 L15.5 20.5" stroke="#fff" stroke-width="1.5"/></g><g transform="translate(154,127) scale(1.0)"><circle cx="9" cy="9" r="7" fill="#d8d8d8"/><path d="M14 8 L21 12 V19 L14 23 L7 19 V12 Z" fill="#e4e4e4" stroke="#ccc"/></g><g transform="translate(185.5,127) scale(1.0)"><path d="M3 8 C2 3 8 2 12 4 C16 5 21 3 21 8 C21 13 16 12 13 14 C10 16 4 14 3 8 Z" fill="#d8d8d8" stroke="#c4c4c4" stroke-width="0.9"/><rect x="13.4" y="13.4" width="9.2" height="9.2" rx="1.5" fill="#cfcfcf" stroke="#c0c0c0" stroke-width="0.8"/><path d="M18.0 14.8 V21.2 M14.6 18.0 H21.4 M15.7 15.7 L20.3 20.3 M20.3 15.7 L15.7 20.3" stroke="#fff" stroke-width="0.9"/><circle cx="18.0" cy="18.0" r="1.6" fill="#cfcfcf"/><circle cx="18.0" cy="18.0" r="1.6" fill="none" stroke="#fff" stroke-width="0.8"/></g><g transform="translate(216,127) scale(1.0)"><path d="M3 8 C2 3 8 2 12 4 C16 5 21 3 21 8 C21 13 16 12 13 14 C10 16 4 14 3 8 Z" fill="#d8d8d8" stroke="#c4c4c4" stroke-width="0.9"/><rect x="13.4" y="13.4" width="9.2" height="9.2" rx="1.5" fill="#cfcfcf" stroke="#c0c0c0" stroke-width="0.8"/><path d="M18.0 14.8 V21.2 M14.6 18.0 H21.4 M15.7 15.7 L20.3 20.3 M20.3 15.7 L15.7 20.3" stroke="#fff" stroke-width="0.9"/><circle cx="18.0" cy="18.0" r="1.6" fill="#cfcfcf"/><circle cx="18.0" cy="18.0" r="1.6" fill="none" stroke="#fff" stroke-width="0.8"/></g><g transform="translate(247,127) scale(1.0)"><path d="M3 8 C2 3 8 2 12 4 C16 5 21 3 21 8 C21 13 16 12 13 14 C10 16 4 14 3 8 Z" fill="#d8d8d8" stroke="#c4c4c4" stroke-width="0.9"/><ellipse cx="11" cy="7.5" rx="5" ry="2.5" fill="#eee"/><rect x="13.4" y="13.4" width="9.2" height="9.2" rx="1.5" fill="#cfcfcf" stroke="#c0c0c0" stroke-width="0.8"/><path d="M18.0 14.8 V21.2 M14.6 18.0 H21.4 M15.7 15.7 L20.3 20.3 M20.3 15.7 L15.7 20.3" stroke="#fff" stroke-width="0.9"/><circle cx="18.0" cy="18.0" r="1.6" fill="#cfcfcf"/><circle cx="18.0" cy="18.0" r="1.6" fill="none" stroke="#fff" stroke-width="0.8"/></g><g transform="translate(278.5,127) scale(1.0)"><path d="M3 8 C2 3 8 2 12 4 C16 5 21 3 21 8 C21 13 16 12 13 14 C10 16 4 14 3 8 Z" fill="#d8d8d8" stroke="#c4c4c4" stroke-width="0.9"/><rect x="13" y="13" width="10" height="10" rx="1.5" fill="#c4c4c4"/><path d="M15.5 15.5 L20.5 20.5 M20.5 15.5 L15.5 20.5" stroke="#fff" stroke-width="1.5"/></g><g transform="translate(309,127) scale(1.0)"><path d="M3 8 C2 3 8 2 12 4 C16 5 21 3 21 8 C21 13 16 12 13 14 C10 16 4 14 3 8 Z" fill="#d8d8d8" stroke="#c4c4c4" stroke-width="0.9"/><rect x="13" y="13" width="10" height="10" rx="1.5" fill="#c4c4c4"/><path d="M15.5 15.5 L20.5 20.5 M20.5 15.5 L15.5 20.5" stroke="#fff" stroke-width="1.5"/></g><g transform="translate(340,127) scale(1.0)"><path d="M3 8 C2 3 8 2 12 4 C16 5 21 3 21 8 C21 13 16 12 13 14 C10 16 4 14 3 8 Z" fill="#d4d4d4"/><path d="M4 22 C8 18 14 16 20 20" stroke="#d4d4d4" stroke-width="3" fill="none"/></g><g transform="translate(371,127) scale(1.0)"><path d="M4 18 C2 14 12 4 18 4 C22 4 22 8 20 10 L10 20 C8 22 5 21 4 18 Z" fill="#d8d8d8"/></g><g transform="translate(402,127) scale(1.0)"><path d="M3 3 L8 15 L13 3" stroke="#ccc" stroke-width="1.2" fill="none"/><rect x="11" y="11" width="10" height="10" rx="1.5" fill="#ccc"/></g><g transform="translate(432,127) scale(1.0)"><path d="M10 2 V22 M3 12 H20" stroke="#ccc" stroke-width="1.5"/><rect x="14" y="3" width="7" height="7" fill="none" stroke="#ccc"/><rect x="3" y="15" width="6" height="6" fill="none" stroke="#ccc"/></g><g transform="translate(463,127) scale(1.0)"><path d="M6 4 C2 8 4 14 10 14 L14 20 M18 4 C22 8 20 14 14 14 L10 20" stroke="#ccc" stroke-width="2" fill="none"/><circle cx="10" cy="21" r="2" fill="none" stroke="#ccc"/><circle cx="14" cy="21" r="2" fill="none" stroke="#ccc"/></g><g transform="translate(494,127) scale(1.0)"><path d="M3 8 C2 3 8 2 12 4 C16 5 21 3 21 8 C21 13 16 12 13 14 C10 16 4 14 3 8 Z" fill="#d4d4d4"/><path d="M4 22 C8 18 14 16 20 20" stroke="#d4d4d4" stroke-width="3" fill="none"/></g><g transform="translate(525.5,127) scale(1.0)"><path d="M3 8 C2 3 8 2 12 4 C16 5 21 3 21 8 C21 13 16 12 13 14 C10 16 4 14 3 8 Z" fill="#d4d4d4"/><path d="M8 8 H16 M12 4 V12" stroke="#eee" stroke-width="1.5"/><path d="M12 14 V22" stroke="#ccc"/></g><g transform="translate(557,127) scale(1.0)"><path d="M10 2 V22 M2 6 H18 M2 11 H18 M2 16 H18" stroke="#ccc" stroke-width="1.2"/></g><g transform="translate(588,127) scale(1.0)"><path d="M5 20 C1 14 4 6 12 5" stroke="#ccc" stroke-width="1.5" fill="none"/><path d="M12 2 L22 8 L12 14 Z" fill="#e6e6e6" stroke="#ccc"/><path d="M12 14 L12 22 L20 22 Z" fill="#f0f0f0" stroke="#ccc"/></g><path d="M108.5 138 H116.5 L112.5 142.5 Z" fill="#555"/><path d="M619 138 H627 L623 142.5 Z" fill="#555"/><rect x="633" y="123" width="1" height="33" fill="#c8c8c8"/><rect x="634" y="123" width="1" height="33" fill="#fff"/><rect x="637" y="128" width="1.6" height="2" fill="#9a9a9a"/><rect x="637" y="132" width="1.6" height="2" fill="#9a9a9a"/><rect x="637" y="136" width="1.6" height="2" fill="#9a9a9a"/><rect x="637" y="140" width="1.6" height="2" fill="#9a9a9a"/><rect x="637" y="144" width="1.6" height="2" fill="#9a9a9a"/><rect x="637" y="148" width="1.6" height="2" fill="#9a9a9a"/><rect x="645.5" y="125.5" width="30" height="28" fill="#cce4f7" stroke="#99c9ef"/><rect x="707.5" y="125.5" width="30" height="28" fill="#cce4f7" stroke="#99c9ef"/><g transform="translate(648,127) scale(1.0)"><path d="M4 6 L8 10 C5 13 6 17 9 18 C12 19 14 17 16 14 L20 18 C16 23 9 24 5 20 C1 16 1 10 4 6 Z" fill="#d42020"/><path d="M4 6 L8 10 M16 14 L20 18" stroke="#fff" stroke-width="1.5"/></g><g transform="translate(680.5,127) scale(1.0)"><path d="M3 3 L9 12 L15 3 M9 12 V21" stroke="#6aaa6a" stroke-width="1.5" fill="none"/><circle cx="3" cy="3" r="2" fill="#fff" stroke="#6aaa6a"/><circle cx="15" cy="3" r="2" fill="#fff" stroke="#6aaa6a"/><circle cx="9" cy="12" r="2" fill="#fff" stroke="#6aaa6a"/><rect x="15" y="8" width="5" height="3" fill="#6aaa6a"/><rect x="15" y="13" width="5" height="3" fill="#6aaa6a"/><path d="M15 20 L18 23 L21 20 Z" fill="#000"/></g><g transform="translate(710,127) scale(1.0)"><path d="M5 7 L11 19 L19 5" stroke="#6aaa6a" stroke-width="1.5" fill="none"/><path d="M17 19 L20 22 L23 19 Z" fill="#000"/></g><rect x="932.5" y="125.5" width="30" height="28" fill="#cce4f7" stroke="#99c9ef"/><rect x="994.5" y="125.5" width="30" height="28" fill="#cce4f7" stroke="#99c9ef"/><g transform="translate(934,127) scale(1.0)"><path d="M12 12 L4 2 M12 12 L22 7 M12 12 L11 22" stroke="#6aaa6a" stroke-width="1.5"/><circle cx="12" cy="12" r="2" fill="#888"/></g><g transform="translate(966,127) scale(1.0)"><path d="M3 8 C3 3 9 2 12 5 C16 3 21 5 19 10 L14 20 C10 24 4 18 6 13 Z" fill="#999"/><circle cx="6" cy="8" r="5" fill="#d42020"/><path d="M8 18 C10 14 16 14 18 18" fill="#8cc08c"/><path d="M14 18 L18 23 L22 18 Z" fill="#000"/></g><g transform="translate(998,127) scale(1.0)"><path d="M3 3 L21 21 M21 3 L3 21" stroke="#6aaa6a" stroke-width="1.5"/><rect x="10" y="10" width="4" height="4" fill="#888"/></g><g transform="translate(1028,127) scale(1.0)"><path d="M3 21 L21 3" stroke="#6aaa6a" stroke-width="1.5"/><path d="M3 6 L9 13 L12 9 L16 17 L12 12 L9 16 Z" fill="#f2d040" stroke="#b08020" stroke-width="0.5"/></g><g transform="translate(1073.5,127) scale(1.0)"><path d="M4 5 L12 12 L5 20 M12 12 L20 15" stroke="#6aaa6a" stroke-width="1.5" fill="none"/><circle cx="4" cy="5" r="2" fill="#fff" stroke="#888"/><circle cx="12" cy="12" r="2" fill="#fff" stroke="#888"/><circle cx="5" cy="20" r="2" fill="#fff" stroke="#888"/><path d="M14 9 L19 2 L22 4 L17 11 Z" fill="#f2d040" stroke="#886a10" stroke-width="0.6"/></g><path d="M1059 138 H1067 L1063 142.5 Z" fill="#000"/><rect x="4" y="162" width="1.6" height="2" fill="#9a9a9a"/><rect x="4" y="166" width="1.6" height="2" fill="#9a9a9a"/><rect x="4" y="170" width="1.6" height="2" fill="#9a9a9a"/><rect x="4" y="174" width="1.6" height="2" fill="#9a9a9a"/><rect x="4" y="178" width="1.6" height="2" fill="#9a9a9a"/><rect x="4" y="182" width="1.6" height="2" fill="#9a9a9a"/><rect x="4" y="186" width="1.6" height="2" fill="#9a9a9a"/><rect x="4" y="190" width="1.6" height="2" fill="#9a9a9a"/><rect x="4" y="194" width="1.6" height="2" fill="#9a9a9a"/><rect x="4" y="198" width="1.6" height="2" fill="#9a9a9a"/><g transform="translate(15,169) scale(1.0)"><rect x="3" y="4" width="16" height="16" fill="none" stroke="#222" stroke-dasharray="2 1.5"/><rect x="4" y="5" width="11" height="11" fill="#f2d54a"/><path d="M10 9 L10 22 L13 19 L16 23 L18 22 L15 18 L19 18 Z" fill="#fff" stroke="#333" stroke-width="0.8"/></g><path d="M46 180 H54 L50 184.5 Z" fill="#000"/><rect x="182" y="157" width="1" height="13" fill="#c8c8c8"/><rect x="183" y="157" width="1" height="13" fill="#fff"/><rect x="187" y="160" width="1.6" height="2" fill="#9a9a9a"/><rect x="187" y="164" width="1.6" height="2" fill="#9a9a9a"/><rect x="187" y="168" width="1.6" height="2" fill="#9a9a9a"/><rect x="258" y="157" width="1" height="13" fill="#c8c8c8"/><rect x="259" y="157" width="1" height="13" fill="#fff"/><rect x="263" y="160" width="1.6" height="2" fill="#9a9a9a"/><rect x="263" y="164" width="1.6" height="2" fill="#9a9a9a"/><rect x="263" y="168" width="1.6" height="2" fill="#9a9a9a"/><rect x="334" y="157" width="1" height="13" fill="#c8c8c8"/><rect x="335" y="157" width="1" height="13" fill="#fff"/><rect x="339" y="160" width="1.6" height="2" fill="#9a9a9a"/><rect x="339" y="164" width="1.6" height="2" fill="#9a9a9a"/><rect x="339" y="168" width="1.6" height="2" fill="#9a9a9a"/><g transform="translate(563,170) scale(1.0)"><rect x="0" y="0" width="24" height="24" fill="#e2e2e2"/><rect x="0" y="0" width="12" height="12" fill="#ebebeb"/><rect x="12" y="12" width="12" height="12" fill="#ebebeb"/><path d="M3 22 L5 16 L18 3 L21 6 L8 19 Z" fill="#f4f4f4" stroke="#ccc"/></g><g transform="translate(593.5,170) scale(1.0)"><rect x="0" y="0" width="24" height="24" fill="#e2e2e2"/><rect x="0" y="0" width="12" height="12" fill="#ebebeb"/><rect x="12" y="12" width="12" height="12" fill="#ebebeb"/><path d="M4 18 C2 14 12 4 18 4 C22 4 22 8 20 10 L10 20 C8 22 5 21 4 18 Z" fill="#cfcfcf"/></g><g transform="translate(624,170) scale(1.0)"><rect x="0" y="0" width="24" height="24" fill="#e2e2e2"/><rect x="0" y="0" width="12" height="12" fill="#ebebeb"/><rect x="12" y="12" width="12" height="12" fill="#ebebeb"/><path d="M3 22 L10 12 L20 3 L22 8 L12 18 Z" fill="#d0d0d0"/></g><g transform="translate(656,170) scale(1.0)"><rect x="0" y="0" width="24" height="24" fill="#e2e2e2"/><rect x="0" y="0" width="12" height="12" fill="#ebebeb"/><rect x="12" y="12" width="12" height="12" fill="#ebebeb"/><text x="6" y="19" font-size="17" font-family="Liberation Serif" fill="#bbb">ε</text></g><g transform="translate(687,170) scale(1.0)"><rect x="0" y="0" width="24" height="24" fill="#e2e2e2"/><rect x="0" y="0" width="12" height="12" fill="#ebebeb"/><rect x="12" y="12" width="12" height="12" fill="#ebebeb"/><path d="M2 14 C6 2 10 2 12 12 C14 22 18 22 22 10" stroke="#b8a8d8" stroke-width="1.8" fill="none"/></g><g transform="translate(717,170) scale(1.0)"><rect x="0" y="0" width="24" height="24" fill="#e2e2e2"/><rect x="0" y="0" width="12" height="12" fill="#ebebeb"/><rect x="12" y="12" width="12" height="12" fill="#ebebeb"/><path d="M20 20 C22 12 16 8 8 9 V4 L2 11 L8 17 V13 C14 12 18 14 20 20 Z" fill="#d0d0d0"/></g><g transform="translate(748.5,170) scale(1.0)"><rect x="0" y="0" width="24" height="24" fill="#e2e2e2"/><rect x="0" y="0" width="12" height="12" fill="#ebebeb"/><rect x="12" y="12" width="12" height="12" fill="#ebebeb"/><path d="M4 20 C2 12 8 8 16 9 V4 L22 11 L16 17 V13 C10 12 6 14 4 20 Z" fill="#d0d0d0"/></g><g transform="translate(780,170) scale(1.0)"><rect x="0" y="0" width="24" height="24" fill="#e2e2e2"/><rect x="0" y="0" width="12" height="12" fill="#ebebeb"/><rect x="12" y="12" width="12" height="12" fill="#ebebeb"/><path d="M4 20 L20 4" stroke="#cfcfcf" stroke-width="5"/></g><g transform="translate(811,170) scale(1.0)"><rect x="0" y="0" width="24" height="24" fill="#a8a8a8"/><rect x="0" y="0" width="12" height="12" fill="#b8b8b8"/><path d="M3 22 L16 8" stroke="#e8c060" stroke-width="4"/><path d="M3 22 L16 8" stroke="#333" stroke-width="0.5"/><circle cx="18" cy="6" r="4" fill="none" stroke="#eee" stroke-width="2"/></g><g transform="translate(838,170) scale(1.0)"><rect x="2" y="1" width="6" height="22" fill="#3cb050" stroke="#1a5a20"/><rect x="8" y="1" width="6" height="22" fill="#5b86c2" stroke="#1a3050"/></g></svg>
<div style="position:absolute;left:737px;top:130px;width:87px;height:21px;background:#fff;border:1px solid #7a7a7a;box-sizing:border-box;"></div>
<div style="position:absolute;top:130.5px;font-size:14px;line-height:18px;color:#000;white-space:nowrap;left:741px;">20</div>
<svg style="position:absolute;left:808px;top:127px;" width="14" height="24" viewBox="0 0 14 24"><path d="M3 8 L7 3.5 L11 8 Z M3 16 L7 20.5 L11 16 Z" fill="#333"/><path d="M1 12 H13" stroke="#bbb"/></svg>
<div style="position:absolute;left:825px;top:129px;width:106px;height:23px;background:#e5e5e5;border:1px solid #adadad;box-sizing:border-box;"></div>
<div style="position:absolute;top:130.5px;font-size:14px;line-height:18px;color:#000;white-space:nowrap;left:829px;">px</div>
<svg style="position:absolute;left:912px;top:133px;" width="14" height="12" viewBox="0 0 14 12"><path d="M2 3 L7 8 L12 3" stroke="#333" fill="none"/></svg>
<div style="position:absolute;top:175.5px;font-size:12.2px;line-height:15px;color:#000;white-space:nowrap;left:418.5px;">Band:</div>
<div style="position:absolute;left:451px;top:171px;width:37px;height:22px;background:#cccccc;border:1px solid #c4c4c4;box-sizing:border-box;"></div>
<div style="position:absolute;top:173.0px;font-size:14px;line-height:18px;color:#999;white-space:nowrap;left:456px;">1</div>
<svg style="position:absolute;left:472px;top:176px;" width="14" height="12" viewBox="0 0 14 12"><path d="M2 3 L7 8 L12 3" stroke="#aaa" fill="none"/></svg>
<div style="position:absolute;left:499px;top:170px;width:50px;height:25px;background:#f6f6f6;border:1px solid #bdbdbd;box-sizing:border-box;"></div>
<div style="position:absolute;top:174.5px;font-size:13px;line-height:16px;color:#555;white-space:nowrap;left:502.5px;">0,0000</div>
<svg style="position:absolute;left:418px;top:207px" width="1502" height="791" viewBox="418 207 1502 791"><defs><pattern id="trees" patternUnits="userSpaceOnUse" x="3" y="215" width="135" height="140"><ellipse cx="8" cy="11.5" rx="2.6" ry="3.1" fill="none" stroke="#92bd88" stroke-width="1"/><path d="M8 14.6 V20" stroke="#92bd88" stroke-width="1"/><path d="M15.5 8.3 L12.6 16 H18.4 Z" fill="none" stroke="#92bd88" stroke-width="1"/><path d="M15.5 16 V20" stroke="#92bd88" stroke-width="1"/><ellipse cx="58.5" cy="5.5" rx="2.6" ry="3.1" fill="none" stroke="#92bd88" stroke-width="1"/><path d="M58.5 8.6 V14" stroke="#92bd88" stroke-width="1"/><path d="M51 2.3 L48.1 10 H53.9 Z" fill="none" stroke="#92bd88" stroke-width="1"/><path d="M51 10 V14" stroke="#92bd88" stroke-width="1"/><ellipse cx="93" cy="17.5" rx="2.6" ry="3.1" fill="none" stroke="#92bd88" stroke-width="1"/><path d="M93 20.6 V26" stroke="#92bd88" stroke-width="1"/><path d="M100.5 14.3 L97.6 22 H103.4 Z" fill="none" stroke="#92bd88" stroke-width="1"/><path d="M100.5 22 V26" stroke="#92bd88" stroke-width="1"/><ellipse cx="35.5" cy="43.5" rx="2.6" ry="3.1" fill="none" stroke="#92bd88" stroke-width="1"/><path d="M35.5 46.6 V52" stroke="#92bd88" stroke-width="1"/><path d="M28 40.3 L25.1 48 H30.9 Z" fill="none" stroke="#92bd88" stroke-width="1"/><path d="M28 48 V52" stroke="#92bd88" stroke-width="1"/><ellipse cx="73" cy="38.5" rx="2.6" ry="3.1" fill="none" stroke="#92bd88" stroke-width="1"/><path d="M73 41.6 V47" stroke="#92bd88" stroke-width="1"/><path d="M80.5 35.3 L77.6 43 H83.4 Z" fill="none" stroke="#92bd88" stroke-width="1"/><path d="M80.5 43 V47" stroke="#92bd88" stroke-width="1"/><ellipse cx="120.5" cy="51.5" rx="2.6" ry="3.1" fill="none" stroke="#92bd88" stroke-width="1"/><path d="M120.5 54.6 V60" stroke="#92bd88" stroke-width="1"/><path d="M113 48.3 L110.1 56 H115.9 Z" fill="none" stroke="#92bd88" stroke-width="1"/><path d="M113 56 V60" stroke="#92bd88" stroke-width="1"/><ellipse cx="11" cy="75.5" rx="2.6" ry="3.1" fill="none" stroke="#92bd88" stroke-width="1"/><path d="M11 78.6 V84" stroke="#92bd88" stroke-width="1"/><path d="M18.5 72.3 L15.6 80 H21.4 Z" fill="none" stroke="#92bd88" stroke-width="1"/><path d="M18.5 80 V84" stroke="#92bd88" stroke-width="1"/><ellipse cx="62.5" cy="83.5" rx="2.6" ry="3.1" fill="none" stroke="#92bd88" stroke-width="1"/><path d="M62.5 86.6 V92" stroke="#92bd88" stroke-width="1"/><path d="M55 80.3 L52.1 88 H57.9 Z" fill="none" stroke="#92bd88" stroke-width="1"/><path d="M55 88 V92" stroke="#92bd88" stroke-width="1"/><ellipse cx="98" cy="91.5" rx="2.6" ry="3.1" fill="none" stroke="#92bd88" stroke-width="1"/><path d="M98 94.6 V100" stroke="#92bd88" stroke-width="1"/><path d="M105.5 88.3 L102.6 96 H108.4 Z" fill="none" stroke="#92bd88" stroke-width="1"/><path d="M105.5 96 V100" stroke="#92bd88" stroke-width="1"/><ellipse cx="33" cy="115.5" rx="2.6" ry="3.1" fill="none" stroke="#92bd88" stroke-width="1"/><path d="M33 118.6 V124" stroke="#92bd88" stroke-width="1"/><path d="M40.5 112.3 L37.6 120 H43.4 Z" fill="none" stroke="#92bd88" stroke-width="1"/><path d="M40.5 120 V124" stroke="#92bd88" stroke-width="1"/><ellipse cx="85.5" cy="121.5" rx="2.6" ry="3.1" fill="none" stroke="#92bd88" stroke-width="1"/><path d="M85.5 124.6 V130" stroke="#92bd88" stroke-width="1"/><path d="M78 118.3 L75.1 126 H80.9 Z" fill="none" stroke="#92bd88" stroke-width="1"/><path d="M78 126 V130" stroke="#92bd88" stroke-width="1"/><ellipse cx="118" cy="128.5" rx="2.6" ry="3.1" fill="none" stroke="#92bd88" stroke-width="1"/><path d="M118 131.6 V137" stroke="#92bd88" stroke-width="1"/><path d="M125.5 125.3 L122.6 133 H128.4 Z" fill="none" stroke="#92bd88" stroke-width="1"/><path d="M125.5 133 V137" stroke="#92bd88" stroke-width="1"/></pattern><pattern id="hatch" patternUnits="userSpaceOnUse" x="7.8" y="0" width="13" height="13"><path d="M-2 2 L2 -2 M0 13 L13 0 M11 15 L15 11" stroke="#0d0d0d" stroke-width="1.7"/></pattern><pattern id="redv" patternUnits="userSpaceOnUse" x="758.9" y="0" width="8" height="10"><path d="M0.5 0 V10" stroke="#e8583a" stroke-width="1.1"/></pattern></defs><rect x="418" y="207" width="1502" height="790" fill="#add19e"/><path d="M1830 207 H1920 V670 L1893 703 L1877 683 L1830 730 Z" fill="#eef0d6"/><path d="M1830 850 L1853 875 L1838 902 L1830 910 Z" fill="#eef0d6"/><path d="M719 869 L737 871 L736 891 L691 914 L590 920 L543 947 L550 997 L570 997 L760 925 L853 888 V828 Z" fill="#cdebb0"/><path d="M570 997 L760 925 L748 933 L775 960 L799 997 Z" fill="#eef0d6"/><path d="M462 997 L545 947 L551 997 Z" fill="#f2dad9"/><path d="M519 959 L541 953 L543 966 L521 972 Z M492 990 L538 980 L540 997 L495 997 Z" fill="#d9d0c9" stroke="#c4b6ab" stroke-width="0.8"/><path d="M418 960 C432 964 444 970 447 980 L449 997 H418 Z" fill="#e0dcd4"/><path d="M418 958 C434 962 446 970 448 982 L449 997" stroke="#fff" stroke-width="2.5" fill="none"/><rect x="418" y="207" width="1502" height="790" fill="url(#trees)"/><path d="M1830 207 H1920 V670 L1893 703 L1877 683 L1830 730 Z" fill="#eef0d6"/><path d="M1830 850 L1853 875 L1838 902 L1830 910 Z" fill="#eef0d6"/><path d="M719 869 L737 871 L736 891 L691 914 L590 920 L543 947 L550 997 L570 997 L760 925 L853 888 V828 Z" fill="#cdebb0"/><path d="M570 997 L760 925 L748 933 L775 960 L799 997 Z" fill="#eef0d6"/><path d="M462 997 L545 947 L551 997 Z" fill="#f2dad9"/><path d="M519 959 L541 953 L543 966 L521 972 Z M492 990 L538 980 L540 997 L495 997 Z" fill="#d9d0c9" stroke="#c4b6ab" stroke-width="0.8"/><path d="M418 960 C432 964 444 970 447 980 L449 997 H418 Z" fill="#e0dcd4"/><path d="M418 958 C434 962 446 970 448 982 L449 997" stroke="#fff" stroke-width="2.5" fill="none"/><path d="M1165 950 L1205 993 L1323 997 L1354 957 L1337 950 Z" fill="#f1eee6"/><path d="M1096 959 C1120 966 1150 968 1165 974 L1190 993" stroke="#e6efe0" stroke-width="3" fill="none"/><path d="M1100 959 C1120 965 1150 967 1163 972" stroke="#b88a3a" stroke-width="1.6" stroke-dasharray="4 5" fill="none"/><path d="M1210 992 C1250 998 1300 998 1340 985 L1352 965 C1345 958 1325 960 1302 959" stroke="#b88a3a" stroke-width="1.8" stroke-dasharray="6 4 2 4" fill="none"/><path d="M1810 997 L1875 968 L1882 960 L1920 958 M1875 968 L1902 997" stroke="#a89aa0" stroke-width="1.5" stroke-dasharray="6 3 2 3" fill="none"/><path d="M1895 984 L1920 976" stroke="#f0ecd0" stroke-width="3" fill="none"/><path d="M1895 984 L1920 976" stroke="#c8a040" stroke-width="1.5" stroke-dasharray="4 3" fill="none"/><path d="M457 984 C490 960 540 940 571 921 C600 900 640 860 685 821 C705 795 735 750 761 712" stroke="#aad3df" stroke-width="4" fill="none"/><path d="M688 826 C730 805 790 775 853 728" stroke="#aad3df" stroke-width="3.5" fill="none"/><path d="M1830 273 L1875 274.5 L1920 292" stroke="#a6cee0" stroke-width="3" fill="none" stroke-linejoin="round"/><path d="M1862 207 H1920 V229 L1897 230 Z" fill="#dcdcdc"/><path d="M1836 207 L1862 207 L1900 230 L1886 238 Z" fill="#fcd6a4" stroke="#c8a060" stroke-width="0.8"/><path d="M1862 388 L1910 326 L1920 330 V470 L1910 478 L1900 470 Z" fill="#d9d9d9" stroke="#c8c8c8" stroke-width="0.8"/><path d="M1880 360 L1897 352 L1902 370 L1885 378 Z M1910 345 L1920 340 V355 L1912 360 Z M1902 396 L1912 392 L1915 404 L1905 408 Z M1908 420 L1915 418 L1917 426 L1910 428 Z" fill="#d9d0c9" stroke="#c4b6ab" stroke-width="0.8"/><path d="M1830 540 L1850 520 L1880 483 L1905 455" stroke="#b08a3a" stroke-width="1.2" fill="none"/><path d="M1903 455 L1920 432" stroke="#fff" stroke-width="4" fill="none"/><path d="M564 999 L797 909 L853 888 M1830 922 L1920 948" stroke="#c4c4c4" stroke-width="9.5" fill="none"/><path d="M564 999 L797 909 L853 888 M1830 922 L1920 948" stroke="#fff" stroke-width="7.5" fill="none"/><path d="M560 994 L795 904 L853 882 M1830 918 L1920 939" stroke="#4a5ac8" stroke-width="1.8" stroke-dasharray="5 3" fill="none"/><path d="M418 272 L627 353 M779 207 L627 353 L534 456 L457 541 L418 565" stroke="#dfe6cc" stroke-width="3.4" fill="none" opacity="0.7"/><path d="M418 272 L627 353 M779 207 L627 353 L534 456 L457 541 L418 565" stroke="#b0963e" stroke-width="2.1" stroke-dasharray="9 4" fill="none"/><text x="0" y="0" font-size="11" font-family="Liberation Sans" fill="#555" stroke="#f4f4f0" stroke-width="2.2" paint-order="stroke" transform="translate(590 418) rotate(-48)">Eselsstraße</text><polygon points="853,330 657.5,431 671,577 596,711 719,867 853,830" fill="url(#hatch)"/><polygon points="853.5,634.5 791.6,705.8 775,720 751,736 751.6,745 761.8,756 853.5,748.7" fill="url(#redv)"/><polygon points="853.5,634.5 791.6,705.8 775,720 751,736 751.6,745 761.8,756 853.5,748.7" fill="none" stroke="#0a0a0a" stroke-width="4.2" stroke-linejoin="round"/><text x="0" y="0" font-size="10" font-family="Liberation Sans" font-style="italic" fill="#5a82b8" stroke="#d8e8ee" stroke-width="1.5" paint-order="stroke" transform="translate(656 850) rotate(-33)">Vorderer Rotenbach</text><polyline points="853,330 657.5,431 671,577 596,711 719,867 853,830" fill="none" stroke="#f6e21c" stroke-width="6" stroke-linejoin="round"/><polyline points="853,330 657.5,431 671,577 596,711 719,867 853,830" fill="none" stroke="#e2ae08" stroke-width="2.2" stroke-linejoin="round"/><rect x="1886.5" y="231" width="40" height="23" rx="2" fill="#f5e6d2" stroke="#e0cca8"/><text x="1894" y="248" font-size="14" font-weight="bold" font-family="Liberation Sans" fill="#6a5a40">B 29</text><text x="0" y="0" font-size="11" font-style="italic" font-family="Liberation Sans" fill="#6a8ec8" transform="translate(1880 291) rotate(20)">Reichenb</text><text x="0" y="0" font-size="10" font-family="Liberation Sans" fill="#333" stroke="#fff" stroke-width="2" paint-order="stroke" transform="translate(1147 953) rotate(62)">en-Weg</text><rect x="796" y="889.5" width="54.5" height="22" rx="2" fill="#f2f2f2" stroke="#dcdcdc"/><text x="823" y="906" text-anchor="middle" font-size="14" font-family="Liberation Sans" fill="#707070">K 4325</text><rect x="611" y="917.5" width="119.5" height="43" rx="10" fill="#ffff8a" stroke="#111" stroke-width="1.2"/><text x="670.5" y="945" text-anchor="middle" font-size="16" font-weight="bold" font-family="Liberation Sans" fill="#000">Bild 10</text><rect x="418" y="997" width="1502" height="1" fill="#8a8a8a"/></svg>
<svg style="position:absolute;left:50px;top:985px" width="368" height="13" viewBox="50 985 368 13"><rect x="50" y="985" width="368" height="13" fill="#add19e"/><rect x="136" y="985" width="282" height="13" fill="#e4e0d8"/><path d="M148 985 L152 997" stroke="#c8a040" stroke-width="1.5"/><rect x="248" y="992" width="14" height="6" fill="#d9d0c9" stroke="#c4b6ab"/><rect x="330" y="991" width="20" height="7" fill="#d9d0c9" stroke="#c4b6ab"/><rect x="50" y="997" width="368" height="1" fill="#8a8a8a"/></svg>
<div style="position:absolute;left:418px;top:206px;width:1502px;height:1px;background:#a0a0a0;"></div>
<div style="position:absolute;left:1919px;top:207px;width:1px;height:791px;background:#7a7f78;"></div>
<div style="position:absolute;left:50px;top:169px;width:369px;height:38px;background:#fff;box-shadow:2px 0 4px rgba(0,0,0,0.18);"></div>
<div style="position:absolute;top:178.5px;font-size:15px;line-height:19px;color:#a0a0a0;white-space:nowrap;left:59px;">Layer</div>
<div style="position:absolute;left:393px;top:178px;width:25px;height:25px;background:#e9e9e9;"></div>
<svg style="position:absolute;left:399.5px;top:184.5px;" width="12" height="12" viewBox="0 0 12 12"><path d="M2 2 L10 10 M10 2 L2 10" stroke="#f6f6f6" stroke-width="0.9"/></svg>
<div style="position:absolute;left:50px;top:207px;width:369px;height:27px;background:#f0f0f0;"></div>
<div style="position:absolute;left:50px;top:233px;width:369px;height:761px;background:#fff;border:1px solid #828282;box-sizing:border-box;box-shadow:2px 0 4px rgba(0,0,0,0.18);"></div>
<div style="position:absolute;left:49px;top:169px;width:1px;height:824px;background:#d0d0d0;"></div>
<div style="position:absolute;left:0;top:0;width:418px;height:993px;overflow:hidden">
<div style="position:absolute;left:125px;top:330px;width:292px;height:24px;background:#d9d9d9;"></div>
<div style="position:absolute;top:236.5px;font-size:15px;line-height:19px;color:#000;white-space:nowrap;font-weight:bold;left:127px;">Funde_WT_2017_2019</div>
<div style="position:absolute;top:261.0px;font-size:14.5px;line-height:18px;color:#000;white-space:nowrap;left:127px;">Strasse_Wege</div>
<div style="position:absolute;top:285.0px;font-size:14.5px;line-height:18px;color:#000;white-space:nowrap;left:127px;">NSG_1937_und_1983</div>
<div style="position:absolute;top:309.0px;font-size:14.5px;line-height:18px;color:#000;white-space:nowrap;left:152px;">NSG_1983</div>
<div style="position:absolute;top:332.5px;font-size:15px;line-height:19px;color:#000;white-space:nowrap;font-weight:bold;text-decoration:underline;left:176px;">nsg_1983_flaeche</div>
<div style="position:absolute;top:356.5px;font-size:15px;line-height:19px;color:#000;white-space:nowrap;font-weight:bold;left:176px;">nsg_1983_umriss</div>
<div style="position:absolute;top:381.0px;font-size:14.5px;line-height:18px;color:#000;white-space:nowrap;left:152px;">NSG_1937 = Alter Bannwald</div>
<div style="position:absolute;top:404.5px;font-size:15px;line-height:19px;color:#000;white-space:nowrap;font-weight:bold;left:176px;">nsg_1937_umriss</div>
<div style="position:absolute;top:428.5px;font-size:15px;line-height:19px;color:#000;white-space:nowrap;font-weight:bold;left:176px;">nsg_1937_flaeche</div>
<div style="position:absolute;top:453.0px;font-size:14.5px;line-height:18px;color:#000;white-space:nowrap;left:127px;">Pflanzengesellschaften</div>
<div style="position:absolute;top:477.0px;font-size:14.5px;line-height:18px;color:#000;white-space:nowrap;left:127px;">Biotope</div>
<div style="position:absolute;top:501.0px;font-size:14.5px;line-height:18px;color:#000;white-space:nowrap;left:127px;">Baumfreie_offene_Moorbereiche</div>
<div style="position:absolute;top:525.0px;font-size:14.5px;line-height:18px;color:#000;white-space:nowrap;left:127px;">Feuchte_und_nasse_Bereiche</div>
<div style="position:absolute;top:548.5px;font-size:15px;line-height:19px;color:#7a7a7a;white-space:nowrap;font-weight:bold;font-style:italic;left:127px;">Bodenarten</div>
<div style="position:absolute;top:572.5px;font-size:15px;line-height:19px;color:#7a7a7a;white-space:nowrap;font-weight:bold;font-style:italic;left:127px;">WT_DGM1_rast</div>
<div style="position:absolute;top:596.5px;font-size:15px;line-height:19px;color:#7a7a7a;white-space:nowrap;font-weight:bold;font-style:italic;left:127px;">WT_DGM1_gpkg</div>
<div style="position:absolute;top:620.5px;font-size:15px;line-height:19px;color:#7a7a7a;white-space:nowrap;font-weight:bold;font-style:italic;left:127px;">WT_DGM1_xyz</div>
<div style="position:absolute;top:644.5px;font-size:15px;line-height:19px;color:#000;white-space:nowrap;font-weight:bold;left:105px;">Funde_WT_2017_2019</div>
<div style="position:absolute;top:668.5px;font-size:15px;line-height:19px;color:#000;white-space:nowrap;font-weight:bold;left:127px;">OpenStreetMap Standard</div>
<div style="position:absolute;top:692.5px;font-size:15px;line-height:19px;color:#7a7a7a;white-space:nowrap;font-weight:bold;font-style:italic;left:127px;">WMS LGRB-BW BK50: Bodenkarte 1 : 50 000</div>
<div style="position:absolute;top:716.5px;font-size:15px;line-height:19px;color:#7a7a7a;white-space:nowrap;font-weight:bold;font-style:italic;left:127px;">WMS LGRB-BW GK50: Geologische Karte 1 : 50 000</div>
<svg style="position:absolute;left:0;top:0" width="418" height="993" viewBox="0 0 418 993"><g transform="translate(55,212)"><path d="M1 9 L7 5 L12 12 L6 15 Z" fill="#e0a050"/><path d="M1 9 L4 7 L7 13 L3 14 Z" fill="#d04040"/><path d="M3 6 L7 4 L8 8 Z" fill="#f2d040"/><path d="M8 10 L15 2" stroke="#d8a050" stroke-width="2.5"/></g><g transform="translate(78,212)"><path d="M2 15 V6 H4 M2 15 H10" stroke="#999" fill="none"/><rect x="4" y="4" width="8" height="10" fill="#fff" stroke="#888"/><path d="M6 3 V12 H9 V1" stroke="#5b86c2" stroke-width="1.2" fill="none"/><circle cx="12" cy="13" r="3" fill="#6aba6a"/></g><g transform="translate(100,212)"><path d="M1 7 C5 1 13 1 17 7 C13 12 5 12 1 7 Z" fill="#e4ecf4" stroke="#999" stroke-width="0.8"/><circle cx="8" cy="7" r="3" fill="#4d6e9e"/><path d="M10 11 H17 L13.5 15 Z" fill="#000"/></g><g transform="translate(124,212)"><path d="M1 2 H15 L10 8 V15 H6 V8 Z" fill="#6ea0d8"/><rect x="1" y="1" width="14" height="2.5" fill="#c8d890"/></g><g transform="translate(146,212)"><text x="0" y="11" font-size="13" font-family="Liberation Serif" fill="#7a4aa0">ε</text><rect x="7" y="9" width="7" height="6" fill="#bbb"/></g><g transform="translate(186,212)"><rect x="1" y="2" width="6" height="12" fill="none" stroke="#ccc"/><rect x="3" y="5" width="3" height="2" fill="#e8a040"/><rect x="3" y="10" width="3" height="2" fill="#e8a040"/><path d="M11 1 V13 M7.5 9.5 L11 14 L14.5 9.5" stroke="#4d86c8" stroke-width="2.5" fill="none"/></g><g transform="translate(209,212)"><rect x="1" y="2" width="6" height="12" fill="none" stroke="#ccc"/><rect x="3" y="5" width="3" height="2" fill="#e8a040"/><rect x="3" y="10" width="3" height="2" fill="#e8a040"/><path d="M11 15 V3 M7.5 6.5 L11 2 L14.5 6.5" stroke="#4d86c8" stroke-width="2.5" fill="none"/></g><g transform="translate(230.5,212)"><rect x="1" y="1" width="12" height="12" fill="#fff" stroke="#666"/><rect x="10" y="10" width="6" height="5" rx="1" fill="#d03030"/><path d="M11 12.5 H15" stroke="#fff"/></g><path d="M170.5 217 H179 L174.75 221.5 Z" fill="#000"/><rect x="79.5" y="238.5" width="15" height="15" fill="#fff" stroke="#333" stroke-width="1"/><path d="M82.5 246 L85.5 249.5 L91.5 242" stroke="#222" stroke-width="1.2" fill="none"/><circle cx="111" cy="246" r="5" fill="#e0b83a" stroke="#7a6a30" stroke-width="0.7"/><path d="M61 265 L66 270 L61 275" stroke="#999" stroke-width="1.3" fill="none"/><rect x="79.5" y="262.5" width="15" height="15" fill="#fff" stroke="#333" stroke-width="1"/><path d="M82.5 270 L85.5 273.5 L91.5 266" stroke="#222" stroke-width="1.2" fill="none"/><g transform="translate(102,260)"><path d="M1.5 19 V9 M1.5 19 H11" stroke="#aaa" fill="none"/><path d="M3.5 17 V7 H6" stroke="#aaa" fill="none"/><rect x="5.5" y="5.5" width="11" height="12" fill="#fff" stroke="#999"/><path d="M8.5 3 V14 H12 V1.5 H10" stroke="#5b86c2" stroke-width="1.3" fill="none"/></g><path d="M58 291.5 L63 296.5 L68 291.5" stroke="#333" stroke-width="1.3" fill="none"/><rect x="79.5" y="286.5" width="15" height="15" fill="#fff" stroke="#333" stroke-width="1"/><path d="M82.5 294 L85.5 297.5 L91.5 290" stroke="#222" stroke-width="1.2" fill="none"/><g transform="translate(102,284)"><path d="M1.5 19 V9 M1.5 19 H11" stroke="#aaa" fill="none"/><path d="M3.5 17 V7 H6" stroke="#aaa" fill="none"/><rect x="5.5" y="5.5" width="11" height="12" fill="#fff" stroke="#999"/><path d="M8.5 3 V14 H12 V1.5 H10" stroke="#5b86c2" stroke-width="1.3" fill="none"/></g><path d="M83 315.5 L88 320.5 L93 315.5" stroke="#333" stroke-width="1.3" fill="none"/><rect x="104.5" y="310.5" width="15" height="15" fill="#fff" stroke="#333" stroke-width="1"/><path d="M107.5 318 L110.5 321.5 L116.5 314" stroke="#222" stroke-width="1.2" fill="none"/><g transform="translate(127,308)"><path d="M1.5 19 V9 M1.5 19 H11" stroke="#aaa" fill="none"/><path d="M3.5 17 V7 H6" stroke="#aaa" fill="none"/><rect x="5.5" y="5.5" width="11" height="12" fill="#fff" stroke="#999"/><path d="M8.5 3 V14 H12 V1.5 H10" stroke="#5b86c2" stroke-width="1.3" fill="none"/></g><rect x="129.5" y="334.5" width="15" height="15" fill="#fff" stroke="#333" stroke-width="1"/><path d="M132.5 342 L135.5 345.5 L141.5 338" stroke="#222" stroke-width="1.2" fill="none"/><rect x="152" y="333" width="18" height="18" fill="#c8dcc0" stroke="#c8a040"/><path d="M154 346 L162 335 M157 350 L168 337" stroke="#222" stroke-width="1.2"/><rect x="129.5" y="358.5" width="15" height="15" fill="#fff" stroke="#333" stroke-width="1"/><path d="M132.5 366 L135.5 369.5 L141.5 362" stroke="#222" stroke-width="1.2" fill="none"/><rect x="151" y="363" width="19" height="7" fill="#f0e010"/><path d="M83 387.5 L88 392.5 L93 387.5" stroke="#333" stroke-width="1.3" fill="none"/><rect x="104.5" y="382.5" width="15" height="15" fill="#fff" stroke="#333" stroke-width="1"/><path d="M107.5 390 L110.5 393.5 L116.5 386" stroke="#222" stroke-width="1.2" fill="none"/><g transform="translate(127,380)"><path d="M1.5 19 V9 M1.5 19 H11" stroke="#aaa" fill="none"/><path d="M3.5 17 V7 H6" stroke="#aaa" fill="none"/><rect x="5.5" y="5.5" width="11" height="12" fill="#fff" stroke="#999"/><path d="M8.5 3 V14 H12 V1.5 H10" stroke="#5b86c2" stroke-width="1.3" fill="none"/></g><rect x="129.5" y="406.5" width="15" height="15" fill="#fff" stroke="#333" stroke-width="1"/><path d="M132.5 414 L135.5 417.5 L141.5 410" stroke="#222" stroke-width="1.2" fill="none"/><rect x="151" y="412" width="19" height="5" fill="#000"/><rect x="129.5" y="430.5" width="15" height="15" fill="#fff" stroke="#333" stroke-width="1"/><path d="M132.5 438 L135.5 441.5 L141.5 434" stroke="#222" stroke-width="1.2" fill="none"/><rect x="152.5" y="429.5" width="17" height="18" fill="#fff" stroke="#d02020" stroke-width="1.8"/><path d="M158 430 V447 M164 430 V447" stroke="#d02020" stroke-width="1.2"/><path d="M61 457 L66 462 L61 467" stroke="#999" stroke-width="1.3" fill="none"/><rect x="79.5" y="454.5" width="15" height="15" fill="#fff" stroke="#333" stroke-width="1"/><g transform="translate(102,452)"><path d="M1.5 19 V9 M1.5 19 H11" stroke="#aaa" fill="none"/><path d="M3.5 17 V7 H6" stroke="#aaa" fill="none"/><rect x="5.5" y="5.5" width="11" height="12" fill="#fff" stroke="#999"/><path d="M8.5 3 V14 H12 V1.5 H10" stroke="#5b86c2" stroke-width="1.3" fill="none"/></g><path d="M61 481 L66 486 L61 491" stroke="#999" stroke-width="1.3" fill="none"/><rect x="79.5" y="478.5" width="15" height="15" fill="#fff" stroke="#333" stroke-width="1"/><g transform="translate(102,476)"><path d="M1.5 19 V9 M1.5 19 H11" stroke="#aaa" fill="none"/><path d="M3.5 17 V7 H6" stroke="#aaa" fill="none"/><rect x="5.5" y="5.5" width="11" height="12" fill="#fff" stroke="#999"/><path d="M8.5 3 V14 H12 V1.5 H10" stroke="#5b86c2" stroke-width="1.3" fill="none"/></g><path d="M61 505 L66 510 L61 515" stroke="#999" stroke-width="1.3" fill="none"/><rect x="79.5" y="502.5" width="15" height="15" fill="#fff" stroke="#333" stroke-width="1"/><g transform="translate(102,500)"><path d="M1.5 19 V9 M1.5 19 H11" stroke="#aaa" fill="none"/><path d="M3.5 17 V7 H6" stroke="#aaa" fill="none"/><rect x="5.5" y="5.5" width="11" height="12" fill="#fff" stroke="#999"/><path d="M8.5 3 V14 H12 V1.5 H10" stroke="#5b86c2" stroke-width="1.3" fill="none"/></g><path d="M61 529 L66 534 L61 539" stroke="#999" stroke-width="1.3" fill="none"/><rect x="79.5" y="526.5" width="15" height="15" fill="#fff" stroke="#333" stroke-width="1"/><g transform="translate(102,524)"><path d="M1.5 19 V9 M1.5 19 H11" stroke="#aaa" fill="none"/><path d="M3.5 17 V7 H6" stroke="#aaa" fill="none"/><rect x="5.5" y="5.5" width="11" height="12" fill="#fff" stroke="#999"/><path d="M8.5 3 V14 H12 V1.5 H10" stroke="#5b86c2" stroke-width="1.3" fill="none"/></g><path d="M61 553 L66 558 L61 563" stroke="#999" stroke-width="1.3" fill="none"/><rect x="79.5" y="550.5" width="15" height="15" fill="#fff" stroke="#333" stroke-width="1"/><path d="M102 552 C102 548 108 550 111 551 C115 550 120 548 120 554 C120 560 116 561 115 565 C110 560 102 563 102 552 Z" fill="#e8e8e8" stroke="#9a9a9a"/><rect x="79.5" y="574.5" width="15" height="15" fill="#fff" stroke="#333" stroke-width="1"/><rect x="103.0" y="574.0" width="5.5" height="5.5" fill="#1f3050"/><rect x="108.5" y="574.0" width="5.5" height="5.5" fill="#fff"/><rect x="114.0" y="574.0" width="5.5" height="5.5" fill="#1f3050"/><rect x="103.0" y="579.5" width="5.5" height="5.5" fill="#fff"/><rect x="108.5" y="579.5" width="5.5" height="5.5" fill="#1f3050"/><rect x="114.0" y="579.5" width="5.5" height="5.5" fill="#8ab0e0"/><rect x="103.0" y="585.0" width="5.5" height="5.5" fill="#1f3050"/><rect x="108.5" y="585.0" width="5.5" height="5.5" fill="#8ab0e0"/><rect x="114.0" y="585.0" width="5.5" height="5.5" fill="#fff"/><rect x="79.5" y="598.5" width="15" height="15" fill="#fff" stroke="#333" stroke-width="1"/><circle cx="111" cy="606" r="5" fill="#f5a020" stroke="#8a5a20" stroke-width="0.7"/><rect x="79.5" y="622.5" width="15" height="15" fill="#fff" stroke="#333" stroke-width="1"/><circle cx="111" cy="630" r="5" fill="#c84040" stroke="#7a3030" stroke-width="0.7"/><rect x="78.5" y="644.5" width="17" height="19" rx="2" fill="#f0f0f0" stroke="#aaa"/><path d="M79 649.5 H95 M81 654 H85 M88 654 H93 M81 658 H85 M88 658 H93" stroke="#aaa"/><path d="M61 673 L66 678 L61 683" stroke="#999" stroke-width="1.3" fill="none"/><rect x="79.5" y="670.5" width="15" height="15" fill="#fff" stroke="#333" stroke-width="1"/><path d="M82.5 678 L85.5 681.5 L91.5 674" stroke="#222" stroke-width="1.2" fill="none"/><rect x="103.0" y="670.0" width="5.5" height="5.5" fill="#1f3050"/><rect x="108.5" y="670.0" width="5.5" height="5.5" fill="#fff"/><rect x="114.0" y="670.0" width="5.5" height="5.5" fill="#1f3050"/><rect x="103.0" y="675.5" width="5.5" height="5.5" fill="#fff"/><rect x="108.5" y="675.5" width="5.5" height="5.5" fill="#1f3050"/><rect x="114.0" y="675.5" width="5.5" height="5.5" fill="#8ab0e0"/><rect x="103.0" y="681.0" width="5.5" height="5.5" fill="#1f3050"/><rect x="108.5" y="681.0" width="5.5" height="5.5" fill="#8ab0e0"/><rect x="114.0" y="681.0" width="5.5" height="5.5" fill="#fff"/><path d="M61 697 L66 702 L61 707" stroke="#999" stroke-width="1.3" fill="none"/><rect x="79.5" y="694.5" width="15" height="15" fill="#fff" stroke="#333" stroke-width="1"/><rect x="103.0" y="694.0" width="5.5" height="5.5" fill="#1f3050"/><rect x="108.5" y="694.0" width="5.5" height="5.5" fill="#fff"/><rect x="114.0" y="694.0" width="5.5" height="5.5" fill="#1f3050"/><rect x="103.0" y="699.5" width="5.5" height="5.5" fill="#fff"/><rect x="108.5" y="699.5" width="5.5" height="5.5" fill="#1f3050"/><rect x="114.0" y="699.5" width="5.5" height="5.5" fill="#8ab0e0"/><rect x="103.0" y="705.0" width="5.5" height="5.5" fill="#1f3050"/><rect x="108.5" y="705.0" width="5.5" height="5.5" fill="#8ab0e0"/><rect x="114.0" y="705.0" width="5.5" height="5.5" fill="#fff"/><path d="M61 721 L66 726 L61 731" stroke="#999" stroke-width="1.3" fill="none"/><rect x="79.5" y="718.5" width="15" height="15" fill="#fff" stroke="#333" stroke-width="1"/><rect x="103.0" y="718.0" width="5.5" height="5.5" fill="#1f3050"/><rect x="108.5" y="718.0" width="5.5" height="5.5" fill="#fff"/><rect x="114.0" y="718.0" width="5.5" height="5.5" fill="#1f3050"/><rect x="103.0" y="723.5" width="5.5" height="5.5" fill="#fff"/><rect x="108.5" y="723.5" width="5.5" height="5.5" fill="#1f3050"/><rect x="114.0" y="723.5" width="5.5" height="5.5" fill="#8ab0e0"/><rect x="103.0" y="729.0" width="5.5" height="5.5" fill="#1f3050"/><rect x="108.5" y="729.0" width="5.5" height="5.5" fill="#8ab0e0"/><rect x="114.0" y="729.0" width="5.5" height="5.5" fill="#fff"/></svg>
</div>
<div style="position:absolute;left:51px;top:972px;width:366px;height:20px;background:#f0f0f0;"></div>
<div style="position:absolute;left:72px;top:973px;width:236px;height:18px;background:#cdcdcd;"></div>
<svg style="position:absolute;left:51px;top:972px;" width="366" height="20" viewBox="0 0 366 20"><path d="M13 5 L8 10 L13 15" stroke="#444" stroke-width="1.6" fill="none"/><path d="M354 5 L359 10 L354 15" stroke="#444" stroke-width="1.6" fill="none"/></svg>
<svg style="position:absolute;left:0;top:0" width="50" height="600" viewBox="0 0 50 600"><rect x="5" y="212" width="2" height="1.6" fill="#9a9a9a"/><rect x="9" y="212" width="2" height="1.6" fill="#9a9a9a"/><rect x="13" y="212" width="2" height="1.6" fill="#9a9a9a"/><rect x="17" y="212" width="2" height="1.6" fill="#9a9a9a"/><rect x="21" y="212" width="2" height="1.6" fill="#9a9a9a"/><rect x="25" y="212" width="2" height="1.6" fill="#9a9a9a"/><rect x="29" y="212" width="2" height="1.6" fill="#9a9a9a"/><rect x="33" y="212" width="2" height="1.6" fill="#9a9a9a"/><rect x="37" y="212" width="2" height="1.6" fill="#9a9a9a"/><rect x="41" y="212" width="2" height="1.6" fill="#9a9a9a"/><rect x="45" y="212" width="2" height="1.6" fill="#9a9a9a"/><g transform="translate(5,220)"><path d="M2 5 L8 19 L14 5 L20 5" stroke="#222" stroke-width="1.2" fill="none"/><circle cx="2" cy="5" r="1.6" fill="#fff" stroke="#222" stroke-width="0.8"/><circle cx="8" cy="19" r="1.6" fill="#fff" stroke="#222" stroke-width="0.8"/><circle cx="14" cy="5" r="1.6" fill="#fff" stroke="#222" stroke-width="0.8"/><circle cx="20" cy="5" r="1.6" fill="#fff" stroke="#222" stroke-width="0.8"/><rect x="14" y="14" width="9" height="9" rx="1.5" fill="#5b9e5b"/><path d="M18.5 16 V21 M16 18.5 H21" stroke="#fff" stroke-width="1.8"/></g><g transform="translate(5,250)"><rect x="1" y="1" width="6" height="6" fill="#2a4a7a"/><rect x="7" y="1" width="6" height="6" fill="#5b86c2"/><rect x="13" y="1" width="6" height="6" fill="#2a4a7a"/><rect x="1" y="7" width="6" height="6" fill="#5b86c2"/><rect x="7" y="7" width="6" height="6" fill="#2a4a7a"/><rect x="13" y="7" width="6" height="6" fill="#8ab0e0"/><rect x="1" y="13" width="6" height="6" fill="#2a4a7a"/><rect x="7" y="13" width="6" height="6" fill="#8ab0e0"/><rect x="13" y="13" width="6" height="6" fill="#5b86c2"/><rect x="14" y="14" width="9" height="9" rx="1.5" fill="#5b9e5b"/><path d="M18.5 16 V21 M16 18.5 H21" stroke="#fff" stroke-width="1.8"/></g><g transform="translate(5,281)"><rect x="1" y="1" width="18" height="18" fill="#8ab0e0" stroke="#2a4a7a"/><path d="M1 10 H19 M10 1 V19 M1 1 L10 10 L19 1" stroke="#2a4a7a" fill="none"/><rect x="14" y="14" width="9" height="9" rx="1.5" fill="#5b9e5b"/><path d="M18.5 16 V21 M16 18.5 H21" stroke="#fff" stroke-width="1.8"/></g><g transform="translate(5,311)"><path d="M6 2 C12 0 14 6 8 11" stroke="#2a4a7a" stroke-width="3" fill="none"/><circle cx="7" cy="4" r="3" fill="#2a4a7a"/><rect x="14" y="14" width="9" height="9" rx="1.5" fill="#5b9e5b"/><path d="M18.5 16 V21 M16 18.5 H21" stroke="#fff" stroke-width="1.8"/></g><g transform="translate(5,341)"><path d="M1 22 C4 12 10 5 20 2 C18 9 13 14 5 17 Z" fill="#7aa0d0" stroke="#3c5f90" stroke-width="0.8"/><rect x="14" y="14" width="9" height="9" rx="1.5" fill="#5b9e5b"/><path d="M18.5 16 V21 M16 18.5 H21" stroke="#fff" stroke-width="1.8"/></g><g transform="translate(5,372)"><rect x="1" y="2" width="19" height="19" rx="2" fill="#8fb0dc" stroke="#555"/><path d="M4 4 L10 16 L16 4" stroke="#333" fill="none"/><rect x="14" y="14" width="9" height="9" rx="1.5" fill="#5b9e5b"/><path d="M18.5 16 V21 M16 18.5 H21" stroke="#fff" stroke-width="1.8"/></g><g transform="translate(5,402)"><path d="M3 4 C3 1 13 1 15 4 C17 8 15 12 12 12 V17 C10 17 9 14 9 12 C5 12 3 9 3 4 Z" fill="#3a6a9a"/><rect x="14" y="14" width="9" height="9" rx="1.5" fill="#5b9e5b"/><path d="M18.5 16 V21 M16 18.5 H21" stroke="#fff" stroke-width="1.8"/></g><path d="M35 412 H44 L39.5 416.5 Z" fill="#000"/><g transform="translate(5,431)"><circle cx="10" cy="10" r="9" fill="#7a9ac8" stroke="#38527a"/><path d="M5 6 C8 4 10 8 12 6 M4 12 C8 14 10 10 15 14" stroke="#1e3050" stroke-width="2" fill="none"/><rect x="14" y="14" width="9" height="9" rx="1.5" fill="#5b9e5b"/><path d="M18.5 16 V21 M16 18.5 H21" stroke="#fff" stroke-width="1.8"/></g><path d="M35 441 H44 L39.5 445.5 Z" fill="#000"/><g transform="translate(5,461)"><circle cx="10" cy="10" r="9" fill="#38527a"/><path d="M1 7 H19 M1 13 H19" stroke="#fff" stroke-width="1.5"/><rect x="4" y="8.5" width="5" height="3" fill="#b8cde8"/><rect x="14" y="14" width="9" height="9" rx="1.5" fill="#5b9e5b"/><path d="M18.5 16 V21 M16 18.5 H21" stroke="#fff" stroke-width="1.8"/></g><g transform="translate(5,491)"><circle cx="10" cy="10" r="9" fill="#b8cde8" stroke="#38527a"/><path d="M4 5 L8 15 L14 5" stroke="#222" stroke-width="1.2" fill="none"/><rect x="14" y="14" width="9" height="9" rx="1.5" fill="#5b9e5b"/><path d="M18.5 16 V21 M16 18.5 H21" stroke="#fff" stroke-width="1.8"/></g><path d="M35 501 H44 L39.5 505.5 Z" fill="#000"/><g transform="translate(5,521)"><path d="M2 4 L8 18 L14 4 L20 4" stroke="#222" stroke-width="1.2" fill="none"/><circle cx="2" cy="4" r="1.6" fill="#fff" stroke="#222" stroke-width="0.8"/><circle cx="14" cy="4" r="1.6" fill="#fff" stroke="#222" stroke-width="0.8"/><circle cx="20" cy="4" r="1.6" fill="#fff" stroke="#222" stroke-width="0.8"/><rect x="13.4" y="15.4" width="7.2" height="7.2" rx="1.5" fill="#e6b833" stroke="#c89a20" stroke-width="0.8"/><path d="M17.0 16.8 V21.2 M14.6 19.0 H19.4 M15.7 17.7 L18.3 20.3 M18.3 17.7 L15.7 20.3" stroke="#fff" stroke-width="0.9"/><circle cx="17.0" cy="19.0" r="1.28" fill="#e6b833"/><circle cx="17.0" cy="19.0" r="1.28" fill="none" stroke="#fff" stroke-width="0.8"/></g><path d="M35 531 H44 L39.5 535.5 Z" fill="#000"/><g transform="translate(8,552)"><rect x="6" y="3" width="17" height="17" fill="#4d78b6"/><path d="M6 7 H23 M6 11 H23 M6 15 H23 M10 3 V20 M14 3 V20 M18 3 V20" stroke="#fff" stroke-width="0.8"/><rect x="15" y="15" width="9" height="9" rx="1.5" fill="#5b9e5b"/><path d="M19.5 17 V22 M17 19.5 H22" stroke="#fff" stroke-width="1.8"/></g></svg>
<div style="position:absolute;left:853px;top:158px;width:977px;height:792px;background:#f0f0f0;border:1px solid #8a8a8a;box-sizing:border-box;box-shadow:0 0 10px rgba(0,0,0,0.25);"></div>
<div style="position:absolute;left:854px;top:159px;width:975px;height:37px;background:#fff;"></div>
<svg style="position:absolute;left:862px;top:166px;" width="21" height="21" viewBox="0 0 21 21"><circle cx="9.66" cy="9.66" r="7.455" fill="none" stroke="#79a838" stroke-width="3.99"/><path d="M10.92 10.92 L18.06 18.48" stroke="#fff" stroke-width="6.72" stroke-linecap="butt"/><path d="M10.5 10.5 L18.48 18.900000000000002" stroke="#6a9a30" stroke-width="4.2" stroke-linecap="butt"/><circle cx="9.24" cy="9.24" r="2.31" fill="#e8863a"/></svg>
<div style="position:absolute;top:167.0px;font-size:16px;line-height:20px;color:#9a9a9a;white-space:nowrap;left:888px;">Differenz</div>
<svg style="position:absolute;left:1800px;top:169px;" width="16" height="16" viewBox="0 0 16 16"><path d="M2 2 L14 14 M14 2 L2 14" stroke="#8a8a8a" stroke-width="1.1"/></svg>
<div style="position:absolute;left:1561px;top:205px;width:256px;height:639px;background:#fff;border:1px solid #7a7a7a;box-sizing:border-box;"></div>
<div style="position:absolute;left:867px;top:205px;width:676px;height:638px;background:#f0f0f0;border:1px solid #d8d8d8;border-right-color:#fff;border-bottom:2px solid #fff;box-sizing:border-box;"></div>
<div style="position:absolute;left:867px;top:876px;width:811px;height:24px;background:#e6e6e6;border:1px solid #bcbcbc;box-sizing:border-box;"></div>
<div style="position:absolute;top:880.5px;font-size:13px;line-height:16px;color:#000;white-space:nowrap;left:1687px;">0%</div>
<div style="position:absolute;left:1725px;top:875px;width:91px;height:26px;background:#cccccc;border:1px solid #bfbfbf;box-sizing:border-box;"></div>
<div style="position:absolute;top:880.5px;font-size:13px;line-height:16px;color:#858585;white-space:nowrap;left:1470.5px;width:600px;text-align:center;">Abbrechen</div>
<div style="position:absolute;left:868px;top:910px;width:158px;height:26px;background:#e1e1e1;border:1px solid #adadad;box-sizing:border-box;"></div>
<div style="position:absolute;top:915.5px;font-size:13px;line-height:16px;color:#000;white-space:nowrap;left:647.0px;width:600px;text-align:center;">Als Batchprozess starten...</div>
<div style="position:absolute;left:1525px;top:910px;width:91px;height:26px;background:#e1e1e1;border:1px solid #adadad;box-sizing:border-box;"></div>
<div style="position:absolute;top:915.5px;font-size:13px;line-height:16px;color:#000;white-space:nowrap;left:1270.5px;width:600px;text-align:center;">Los</div>
<div style="position:absolute;left:1625px;top:910px;width:91px;height:26px;background:#e1e1e1;border:1px solid #adadad;box-sizing:border-box;"></div>
<div style="position:absolute;top:915.5px;font-size:13px;line-height:16px;color:#000;white-space:nowrap;left:1370.5px;width:600px;text-align:center;">Schließen</div>
<div style="position:absolute;left:1725px;top:910px;width:91px;height:26px;background:#e1e1e1;border:1px solid #adadad;box-sizing:border-box;"></div>
<div style="position:absolute;top:915.5px;font-size:13px;line-height:16px;color:#000;white-space:nowrap;left:1470.5px;width:600px;text-align:center;">Hilfe</div>
<div style="position:absolute;left:862px;top:196px;width:944px;height:592px;background:#f0f0f0;border:1px solid #5a5a5a;box-sizing:border-box;box-shadow:0 4px 18px rgba(0,0,0,0.35);"></div>
<div style="position:absolute;left:863px;top:197px;width:942px;height:88px;background:#fff;"></div>
<svg style="position:absolute;left:871px;top:204px;" width="21" height="21" viewBox="0 0 21 21"><circle cx="9.66" cy="9.66" r="7.455" fill="none" stroke="#79a838" stroke-width="3.99"/><path d="M10.92 10.92 L18.06 18.48" stroke="#fff" stroke-width="6.72" stroke-linecap="butt"/><path d="M10.5 10.5 L18.48 18.900000000000002" stroke="#6a9a30" stroke-width="4.2" stroke-linecap="butt"/><circle cx="9.24" cy="9.24" r="2.31" fill="#e8863a"/></svg>
<div style="position:absolute;top:205.5px;font-size:15.4px;line-height:20px;color:#000;white-space:nowrap;left:897px;">Datei speichern</div>
<svg style="position:absolute;left:1776px;top:207px;" width="16" height="16" viewBox="0 0 16 16"><path d="M2 2 L14 14 M14 2 L2 14" stroke="#000" stroke-width="1.2"/></svg>
<svg style="position:absolute;left:874px;top:245px;" width="120" height="28" viewBox="0 0 120 28"><path d="M5 13 H20 M11 7 L5 13 L11 19" stroke="#c4c4c4" stroke-width="1.3" fill="none"/><path d="M44 13 H59 M53 7 L59 13 L53 19" stroke="#c4c4c4" stroke-width="1.3" fill="none"/><path d="M77 12 L81 16 L85 12" stroke="#c4c4c4" stroke-width="1.2" fill="none"/><path d="M107 23 V8 M101 14 L107 8 L113 14" stroke="#555" stroke-width="1.5" fill="none"/></svg>
<div style="position:absolute;left:997px;top:239px;width:531px;height:39px;background:#fff;border:1px solid #d9d9d9;box-sizing:border-box;"></div>
<div style="position:absolute;left:1485px;top:239px;width:1px;height:39px;background:#d9d9d9;"></div>
<svg style="position:absolute;left:1002px;top:249px;" width="16" height="18" viewBox="0 0 16 18"><path d="M1 2 L6 0 V16 L1 18 Z" fill="#e8b830"/><path d="M3 2 H14 V16 H3 Z" fill="#f8d878"/><path d="M1 2 L6 0 V16 L1 18 Z" fill="#f0c850"/></svg>
<div style="position:absolute;top:250.0px;font-size:13px;line-height:16px;color:#555;white-space:nowrap;left:1026px;">«</div>
<div style="position:absolute;top:249.5px;font-size:14.3px;line-height:18px;color:#000;white-space:nowrap;left:1045px;">_QGIS für Pilzfreunde</div>
<svg style="position:absolute;left:1192px;top:252px;" width="10" height="12" viewBox="0 0 10 12"><path d="M3 2 L7 6 L3 10" stroke="#555" stroke-width="1" fill="none"/></svg>
<div style="position:absolute;top:249.5px;font-size:14.3px;line-height:18px;color:#000;white-space:nowrap;left:1211px;">Shape-Exporte</div>
<svg style="position:absolute;left:1318px;top:252px;" width="10" height="12" viewBox="0 0 10 12"><path d="M3 2 L7 6 L3 10" stroke="#555" stroke-width="1" fill="none"/></svg>
<div style="position:absolute;top:249.5px;font-size:14.3px;line-height:18px;color:#000;white-space:nowrap;left:1336px;">WT</div>
<svg style="position:absolute;left:1366px;top:252px;" width="10" height="12" viewBox="0 0 10 12"><path d="M3 2 L7 6 L3 10" stroke="#555" stroke-width="1" fill="none"/></svg>
<svg style="position:absolute;left:1457px;top:252px;" width="16" height="14" viewBox="0 0 16 14"><path d="M2 4 L8 10 L14 4" stroke="#444" stroke-width="1.4" fill="none"/></svg>
<svg style="position:absolute;left:1496px;top:248px;" width="22" height="22" viewBox="0 0 22 22"><path d="M16.5 7 A7 7 0 1 1 11 4" stroke="#555" stroke-width="1.6" fill="none"/><path d="M9 1 L13 4 L9 7" stroke="#555" stroke-width="1.4" fill="none"/></svg>
<div style="position:absolute;left:1540px;top:239px;width:253px;height:39px;background:#fff;border:1px solid #d9d9d9;box-sizing:border-box;"></div>
<svg style="position:absolute;left:1556px;top:249px;" width="20" height="20" viewBox="0 0 20 20"><circle cx="12" cy="7.5" r="5" fill="none" stroke="#666" stroke-width="1.2"/><path d="M8.5 11 L2.5 17" stroke="#666" stroke-width="1.4"/></svg>
<div style="position:absolute;top:249.5px;font-size:14.3px;line-height:18px;color:#6d6d6d;white-space:nowrap;left:1591px;">"WT" durchsuchen</div>
<div style="position:absolute;left:990px;top:229px;width:412px;height:53px;border:4px solid #e60000;box-sizing:border-box;"></div>
<div style="position:absolute;left:863px;top:285px;width:942px;height:38px;background:#f5f6f7;"></div>
<div style="position:absolute;top:295.5px;font-size:14.3px;line-height:18px;color:#1f3551;white-space:nowrap;left:885px;">Organisieren</div>
<svg style="position:absolute;left:972px;top:299px;" width="12" height="10" viewBox="0 0 12 10"><path d="M1 2 H10 L5.5 7 Z" fill="#1f3551"/></svg>
<div style="position:absolute;top:295.5px;font-size:14.3px;line-height:18px;color:#1f3551;white-space:nowrap;left:1019px;">Neuer Ordner</div>
<svg style="position:absolute;left:1686px;top:292px;" width="26" height="24" viewBox="0 0 26 24"><rect x="3.5" y="4" width="5" height="15.5" fill="#fff" stroke="#b8a898" stroke-width="0.9"/><rect x="5" y="6" width="2" height="2" fill="#444"/><rect x="5" y="11" width="2" height="2" fill="#444"/><rect x="5" y="16" width="2" height="2" fill="#444"/><path d="M11 6.5 H16 M17.5 6.5 H22.5 M11 11.5 H16 M17.5 11.5 H22.5 M11 16.5 H16 M17.5 16.5 H22.5" stroke="#555" stroke-width="0.9"/></svg>
<svg style="position:absolute;left:1717px;top:299px;" width="14" height="10" viewBox="0 0 14 10"><path d="M2 2 H12 L7 7 Z" fill="#1f3551"/></svg>
<svg style="position:absolute;left:1765px;top:293px;" width="22" height="22" viewBox="0 0 22 22"><circle cx="11" cy="11" r="10" fill="#0d63b6"/><text x="11" y="16.5" text-anchor="middle" font-size="15" font-family="Liberation Sans" fill="#fff">?</text></svg>
<div style="position:absolute;left:863px;top:323px;width:942px;height:312px;background:#fff;"></div>
<div style="position:absolute;left:863px;top:324px;width:359px;height:30px;background:#d9d9d9;"></div>
<div style="position:absolute;left:863px;top:323px;width:359px;height:312px;overflow:hidden">
<svg style="position:absolute;left:0;top:0" width="359" height="330"><g transform="translate(94,8.5)"><path d="M0 2 L5 0 V15 L0 17 Z" fill="#e2b53a"/><path d="M2 1.5 H12 V15 H2 Z" fill="#f9dc7c"/><path d="M0 2 L5 0 V15 L0 17 Z" fill="#efc550"/></g></svg>
<div style="position:absolute;top:7.5px;font-size:14.3px;line-height:18px;color:#000;white-space:nowrap;left:115px;">WT</div>
<svg style="position:absolute;left:0;top:0" width="359" height="330"><g transform="translate(103,38.5)"><path d="M0 2 L5 0 V15 L0 17 Z" fill="#e2b53a"/><path d="M2 1.5 H12 V15 H2 Z" fill="#f9dc7c"/><path d="M0 2 L5 0 V15 L0 17 Z" fill="#efc550"/></g></svg>
<div style="position:absolute;top:37.5px;font-size:14.3px;line-height:18px;color:#000;white-space:nowrap;left:125px;">PflGes</div>
<svg style="position:absolute;left:0;top:0" width="359" height="330"><g transform="translate(103,68.5)"><path d="M0 2 L5 0 V15 L0 17 Z" fill="#e2b53a"/><path d="M2 1.5 H12 V15 H2 Z" fill="#f9dc7c"/><path d="M0 2 L5 0 V15 L0 17 Z" fill="#efc550"/></g></svg>
<div style="position:absolute;top:67.5px;font-size:14.3px;line-height:18px;color:#000;white-space:nowrap;left:125px;">PflGes_Fotos</div>
<svg style="position:absolute;left:0;top:0" width="359" height="330"><g transform="translate(83,98.5)"><path d="M0 2 L5 0 V15 L0 17 Z" fill="#e2b53a"/><path d="M2 1.5 H12 V15 H2 Z" fill="#f9dc7c"/><path d="M0 2 L5 0 V15 L0 17 Z" fill="#efc550"/></g></svg>
<div style="position:absolute;top:97.5px;font-size:14.3px;line-height:18px;color:#000;white-space:nowrap;left:105px;">Shapes</div>
<svg style="position:absolute;left:0;top:0" width="359" height="330"><g transform="translate(83,128.5)"><path d="M0 2 L5 0 V15 L0 17 Z" fill="#e2b53a"/><path d="M2 1.5 H12 V15 H2 Z" fill="#f9dc7c"/><path d="M0 2 L5 0 V15 L0 17 Z" fill="#efc550"/></g></svg>
<div style="position:absolute;top:127.5px;font-size:14.3px;line-height:18px;color:#000;white-space:nowrap;left:105px;">tiff_export</div>
<svg style="position:absolute;left:0;top:0" width="359" height="330"><g transform="translate(83,158.5)"><path d="M0 2 L5 0 V15 L0 17 Z" fill="#e2b53a"/><path d="M2 1.5 H12 V15 H2 Z" fill="#f9dc7c"/><path d="M0 2 L5 0 V15 L0 17 Z" fill="#efc550"/></g></svg>
<div style="position:absolute;top:157.5px;font-size:14.3px;line-height:18px;color:#000;white-space:nowrap;left:105px;">Tutorials und Docs</div>
<svg style="position:absolute;left:0;top:0" width="359" height="330"><g transform="translate(83,188.5)"><path d="M0 2 L5 0 V15 L0 17 Z" fill="#e2b53a"/><path d="M2 1.5 H12 V15 H2 Z" fill="#f9dc7c"/><path d="M0 2 L5 0 V15 L0 17 Z" fill="#efc550"/></g></svg>
<div style="position:absolute;top:187.5px;font-size:14.3px;line-height:18px;color:#000;white-space:nowrap;left:105px;">xlsx-Importe</div>
<svg style="position:absolute;left:0;top:0" width="359" height="330"><g transform="translate(83,218.5)"><path d="M0 2 L5 0 V15 L0 17 Z" fill="#e2b53a"/><path d="M2 1.5 H12 V15 H2 Z" fill="#f9dc7c"/><path d="M0 2 L5 0 V15 L0 17 Z" fill="#efc550"/></g></svg>
<div style="position:absolute;top:217.5px;font-size:14.3px;line-height:18px;color:#000;white-space:nowrap;left:105px;">xyz_importe</div>
<svg style="position:absolute;left:0;top:0" width="359" height="330"><g transform="translate(73,248.5)"><path d="M0 2 L5 0 V15 L0 17 Z" fill="#e2b53a"/><path d="M2 1.5 H12 V15 H2 Z" fill="#f9dc7c"/><path d="M0 2 L5 0 V15 L0 17 Z" fill="#efc550"/></g></svg>
<div style="position:absolute;top:247.5px;font-size:14.3px;line-height:18px;color:#000;white-space:nowrap;left:95px;">adobeTemp</div>
<svg style="position:absolute;left:0;top:0" width="359" height="330"><g transform="translate(73,278.5)"><path d="M0 2 L5 0 V15 L0 17 Z" fill="#e2b53a"/><path d="M2 1.5 H12 V15 H2 Z" fill="#f9dc7c"/><path d="M0 2 L5 0 V15 L0 17 Z" fill="#efc550"/></g></svg>
<div style="position:absolute;top:277.5px;font-size:14.3px;line-height:18px;color:#000;white-space:nowrap;left:95px;">Backups, Lizenzen</div>
<svg style="position:absolute;left:0;top:0" width="359" height="330"><g transform="translate(73,308.5)"><path d="M0 2 L5 0 V15 L0 17 Z" fill="#e2b53a"/><path d="M2 1.5 H12 V15 H2 Z" fill="#f9dc7c"/><path d="M0 2 L5 0 V15 L0 17 Z" fill="#efc550"/></g></svg>
<div style="position:absolute;top:307.5px;font-size:14.3px;line-height:18px;color:#000;white-space:nowrap;left:95px;">Screenshots Stativ usw_Zwei_Vorlagen</div>
</div>
<div style="position:absolute;left:1222px;top:324px;width:21px;height:311px;background:#f0f0f0;"></div>
<div style="position:absolute;left:1223px;top:452px;width:19px;height:21px;background:#cdcdcd;"></div>
<svg style="position:absolute;left:1222px;top:324px;" width="21" height="311" viewBox="0 0 21 311"><path d="M6 14 L10.5 9.5 L15 14" stroke="#555" stroke-width="1.5" fill="none"/><path d="M6 297 L10.5 301.5 L15 297" stroke="#555" stroke-width="1.5" fill="none"/></svg>
<div style="position:absolute;top:332.0px;font-size:14.3px;line-height:18px;color:#4c607a;white-space:nowrap;left:1269px;">Name</div>
<svg style="position:absolute;left:1417px;top:322px;" width="15" height="10" viewBox="0 0 15 10"><path d="M2 8 L7.5 3 L13 8" stroke="#777" stroke-width="1" fill="none"/></svg>
<div style="position:absolute;left:1587px;top:327px;width:1px;height:30px;background:#e5e5e5;"></div>
<div style="position:absolute;left:1767px;top:327px;width:1px;height:30px;background:#e5e5e5;"></div>
<div style="position:absolute;top:332.0px;font-size:14.3px;line-height:18px;color:#4c607a;white-space:nowrap;left:1595px;">Änderungsdatum</div>
<div style="position:absolute;top:332.0px;font-size:14.3px;line-height:18px;color:#4c607a;white-space:nowrap;left:1775px;">Ty</div>
<div style="position:absolute;left:1243px;top:358px;width:542px;height:257px;overflow:hidden">
<div style="position:absolute;top:11.5px;font-size:14.3px;line-height:18px;color:#000;white-space:nowrap;left:53px;">PflGes</div>
<div style="position:absolute;top:11.5px;font-size:14.3px;line-height:18px;color:#6d6d6d;white-space:nowrap;left:352px;">30.12.2019 17:56</div>
<div style="position:absolute;top:11.5px;font-size:14.3px;line-height:18px;color:#6d6d6d;white-space:nowrap;left:532px;">D</div>
<div style="position:absolute;top:38.5px;font-size:14.3px;line-height:18px;color:#000;white-space:nowrap;left:53px;">PflGes_Fotos</div>
<div style="position:absolute;top:38.5px;font-size:14.3px;line-height:18px;color:#6d6d6d;white-space:nowrap;left:352px;">31.12.2019 09:51</div>
<div style="position:absolute;top:38.5px;font-size:14.3px;line-height:18px;color:#6d6d6d;white-space:nowrap;left:532px;">D</div>
<div style="position:absolute;top:65.5px;font-size:14.3px;line-height:18px;color:#000;white-space:nowrap;left:53px;">Baumfrei.shp</div>
<div style="position:absolute;top:65.5px;font-size:14.3px;line-height:18px;color:#6d6d6d;white-space:nowrap;left:352px;">08.02.2021 08:22</div>
<div style="position:absolute;top:65.5px;font-size:14.3px;line-height:18px;color:#6d6d6d;white-space:nowrap;left:532px;">S</div>
<div style="position:absolute;top:92.5px;font-size:14.3px;line-height:18px;color:#000;white-space:nowrap;left:53px;">Bodenarten.shp</div>
<div style="position:absolute;top:92.5px;font-size:14.3px;line-height:18px;color:#6d6d6d;white-space:nowrap;left:352px;">08.02.2021 11:56</div>
<div style="position:absolute;top:92.5px;font-size:14.3px;line-height:18px;color:#6d6d6d;white-space:nowrap;left:532px;">S</div>
<div style="position:absolute;top:119.5px;font-size:14.3px;line-height:18px;color:#000;white-space:nowrap;left:53px;">fpc_punkte.shp</div>
<div style="position:absolute;top:119.5px;font-size:14.3px;line-height:18px;color:#6d6d6d;white-space:nowrap;left:352px;">20.04.2020 09:42</div>
<div style="position:absolute;top:119.5px;font-size:14.3px;line-height:18px;color:#6d6d6d;white-space:nowrap;left:532px;">S</div>
<div style="position:absolute;top:146.5px;font-size:14.3px;line-height:18px;color:#000;white-space:nowrap;left:53px;">fpc_punkte_ETRS_89.shp</div>
<div style="position:absolute;top:146.5px;font-size:14.3px;line-height:18px;color:#6d6d6d;white-space:nowrap;left:352px;">17.04.2020 18:45</div>
<div style="position:absolute;top:146.5px;font-size:14.3px;line-height:18px;color:#6d6d6d;white-space:nowrap;left:532px;">S</div>
<div style="position:absolute;top:173.5px;font-size:14.3px;line-height:18px;color:#000;white-space:nowrap;left:53px;">fpc_punkte_puffer.shp</div>
<div style="position:absolute;top:173.5px;font-size:14.3px;line-height:18px;color:#6d6d6d;white-space:nowrap;left:352px;">20.04.2020 09:58</div>
<div style="position:absolute;top:173.5px;font-size:14.3px;line-height:18px;color:#6d6d6d;white-space:nowrap;left:532px;">S</div>
<div style="position:absolute;top:200.5px;font-size:14.3px;line-height:18px;color:#000;white-space:nowrap;left:53px;">Funde_baumfrei.shp</div>
<div style="position:absolute;top:200.5px;font-size:14.3px;line-height:18px;color:#6d6d6d;white-space:nowrap;left:352px;">17.03.2020 18:53</div>
<div style="position:absolute;top:200.5px;font-size:14.3px;line-height:18px;color:#6d6d6d;white-space:nowrap;left:532px;">S</div>
<div style="position:absolute;top:227.5px;font-size:14.3px;line-height:18px;color:#000;white-space:nowrap;left:53px;">funde_strasse_wege.shp</div>
<div style="position:absolute;top:227.5px;font-size:14.3px;line-height:18px;color:#6d6d6d;white-space:nowrap;left:352px;">05.02.2021 09:12</div>
<div style="position:absolute;top:227.5px;font-size:14.3px;line-height:18px;color:#6d6d6d;white-space:nowrap;left:532px;">S</div>
<div style="position:absolute;top:254.5px;font-size:14.3px;line-height:18px;color:#000;white-space:nowrap;left:53px;">funde_xyz.shp</div>
<div style="position:absolute;top:254.5px;font-size:14.3px;line-height:18px;color:#6d6d6d;white-space:nowrap;left:352px;">05.02.2021 09:12</div>
<div style="position:absolute;top:254.5px;font-size:14.3px;line-height:18px;color:#6d6d6d;white-space:nowrap;left:532px;">S</div>
<svg style="position:absolute;left:0;top:0" width="542" height="280"><g transform="translate(31,12.5)"><path d="M0 2 L5 0 V15 L0 17 Z" fill="#e2b53a"/><path d="M2 1.5 H12 V15 H2 Z" fill="#f9dc7c"/><path d="M0 2 L5 0 V15 L0 17 Z" fill="#efc550"/></g><g transform="translate(31,39.5)"><path d="M0 2 L5 0 V15 L0 17 Z" fill="#e2b53a"/><path d="M2 1.5 H12 V15 H2 Z" fill="#f9dc7c"/><path d="M0 2 L5 0 V15 L0 17 Z" fill="#efc550"/></g><g transform="translate(31,65.5)"><path d="M0.5 0.5 H9.5 L13.5 4.5 V18.5 H0.5 Z" fill="#fff" stroke="#8a8a8a"/><path d="M9.5 0.5 V4.5 H13.5" fill="none" stroke="#8a8a8a"/></g><g transform="translate(31,92.5)"><path d="M0.5 0.5 H9.5 L13.5 4.5 V18.5 H0.5 Z" fill="#fff" stroke="#8a8a8a"/><path d="M9.5 0.5 V4.5 H13.5" fill="none" stroke="#8a8a8a"/></g><g transform="translate(31,119.5)"><path d="M0.5 0.5 H9.5 L13.5 4.5 V18.5 H0.5 Z" fill="#fff" stroke="#8a8a8a"/><path d="M9.5 0.5 V4.5 H13.5" fill="none" stroke="#8a8a8a"/></g><g transform="translate(31,146.5)"><path d="M0.5 0.5 H9.5 L13.5 4.5 V18.5 H0.5 Z" fill="#fff" stroke="#8a8a8a"/><path d="M9.5 0.5 V4.5 H13.5" fill="none" stroke="#8a8a8a"/></g><g transform="translate(31,173.5)"><path d="M0.5 0.5 H9.5 L13.5 4.5 V18.5 H0.5 Z" fill="#fff" stroke="#8a8a8a"/><path d="M9.5 0.5 V4.5 H13.5" fill="none" stroke="#8a8a8a"/></g><g transform="translate(31,200.5)"><path d="M0.5 0.5 H9.5 L13.5 4.5 V18.5 H0.5 Z" fill="#fff" stroke="#8a8a8a"/><path d="M9.5 0.5 V4.5 H13.5" fill="none" stroke="#8a8a8a"/></g><g transform="translate(31,227.5)"><path d="M0.5 0.5 H9.5 L13.5 4.5 V18.5 H0.5 Z" fill="#fff" stroke="#8a8a8a"/><path d="M9.5 0.5 V4.5 H13.5" fill="none" stroke="#8a8a8a"/></g><g transform="translate(31,254.5)"><path d="M0.5 0.5 H9.5 L13.5 4.5 V18.5 H0.5 Z" fill="#fff" stroke="#8a8a8a"/><path d="M9.5 0.5 V4.5 H13.5" fill="none" stroke="#8a8a8a"/></g></svg>
</div>
<div style="position:absolute;left:1785px;top:324px;width:20px;height:291px;background:#f0f0f0;"></div>
<div style="position:absolute;left:1786px;top:345px;width:18px;height:76px;background:#cdcdcd;"></div>
<svg style="position:absolute;left:1785px;top:324px;" width="20" height="291" viewBox="0 0 20 291"><path d="M5.5 14 L10 9.5 L14.5 14" stroke="#555" stroke-width="1.5" fill="none"/><path d="M5.5 276 L10 280.5 L14.5 276" stroke="#555" stroke-width="1.5" fill="none"/></svg>
<div style="position:absolute;left:1243px;top:615px;width:542px;height:20px;background:#f0f0f0;"></div>
<div style="position:absolute;left:1269px;top:616px;width:338px;height:18px;background:#cdcdcd;"></div>
<div style="position:absolute;left:1785px;top:615px;width:20px;height:20px;background:#fff;"></div>
<svg style="position:absolute;left:1243px;top:615px;" width="542" height="20" viewBox="0 0 542 20"><path d="M13 5.5 L8.5 10 L13 14.5" stroke="#555" stroke-width="1.5" fill="none"/><path d="M527 5.5 L531.5 10 L527 14.5" stroke="#555" stroke-width="1.5" fill="none"/></svg>
<div style="position:absolute;top:653.5px;font-size:14.3px;line-height:18px;color:#000;white-space:nowrap;right:906px;">Dateiname:</div>
<div style="position:absolute;left:1020px;top:648px;width:779px;height:28px;background:#fff;border:1px solid #1a73b8;box-sizing:border-box;"></div>
<div style="position:absolute;top:653.0px;font-size:14.3px;line-height:18px;color:#000;white-space:nowrap;left:1027px;">nsg_1983 minus nsg_1937</div>
<div style="position:absolute;left:1198px;top:652px;width:1px;height:20px;background:#000;"></div>
<svg style="position:absolute;left:1780px;top:655px;" width="16" height="14" viewBox="0 0 16 14"><path d="M2 4 L8 10 L14 4" stroke="#444" stroke-width="1.1" fill="none"/></svg>
<div style="position:absolute;top:684.5px;font-size:14.3px;line-height:18px;color:#000;white-space:nowrap;right:906px;">Dateityp:</div>
<div style="position:absolute;left:1020px;top:679px;width:779px;height:28px;background:#e1e1e1;border:1px solid #adadad;box-sizing:border-box;"></div>
<div style="position:absolute;top:684.0px;font-size:14.3px;line-height:18px;color:#000;white-space:nowrap;left:1024px;">SHP-Dateien (*.shp)</div>
<svg style="position:absolute;left:1780px;top:686px;" width="16" height="14" viewBox="0 0 16 14"><path d="M2 4 L8 10 L14 4" stroke="#444" stroke-width="1.1" fill="none"/></svg>
<div style="position:absolute;left:914px;top:639px;width:308px;height:75px;border:4px solid #e60000;box-sizing:border-box;"></div>
<svg style="position:absolute;left:875px;top:752px;" width="16" height="14" viewBox="0 0 16 14"><path d="M3 10 L8 5 L13 10" stroke="#333" stroke-width="1.5" fill="none"/></svg>
<div style="position:absolute;top:751.0px;font-size:14.3px;line-height:18px;color:#000;white-space:nowrap;left:897px;">Ordner ausblenden</div>
<div style="position:absolute;left:1548px;top:740px;width:111px;height:31px;background:#e1e1e1;border:2px solid #0a64b4;box-sizing:border-box;"></div>
<div style="position:absolute;top:746.5px;font-size:14.3px;line-height:18px;color:#000;white-space:nowrap;left:1303.5px;width:600px;text-align:center;">Speichern</div>
<div style="position:absolute;left:1676px;top:740px;width:108px;height:31px;background:#e1e1e1;border:1px solid #adadad;box-sizing:border-box;"></div>
<div style="position:absolute;top:746.5px;font-size:14.3px;line-height:18px;color:#000;white-space:nowrap;left:1430px;width:600px;text-align:center;">Abbrechen</div>
<svg style="position:absolute;left:1788px;top:772px;" width="14" height="14" viewBox="0 0 14 14"><rect x="9" y="1" width="3" height="3" fill="#b0b0b0"/><rect x="5" y="5" width="3" height="3" fill="#b0b0b0"/><rect x="9" y="5" width="3" height="3" fill="#b0b0b0"/><rect x="1" y="9" width="3" height="3" fill="#b0b0b0"/><rect x="5" y="9" width="3" height="3" fill="#b0b0b0"/><rect x="9" y="9" width="3" height="3" fill="#b0b0b0"/></svg>
<svg style="position:absolute;left:1627px;top:771px;" width="16" height="22" viewBox="0 0 16 22"><path d="M1.5 1.5 V17 L5.5 13 L8.5 20 L11.5 18.5 L8.5 12 H14 Z" fill="#a018e8" stroke="#000" stroke-width="1"/></svg>
<div style="position:absolute;left:0px;top:998px;width:1920px;height:33px;background:#f0f0f0;"></div>
<div style="position:absolute;left:0px;top:998px;width:1920px;height:1px;background:#fafafa;"></div>
<div style="position:absolute;left:0px;top:1030px;width:1920px;height:1px;background:#6a6a6a;"></div>
<div style="position:absolute;left:4px;top:1004px;width:277px;height:22px;background:#fff;border:1px solid #7a7a7a;box-sizing:border-box;"></div>
<svg style="position:absolute;left:10px;top:1007px;" width="18" height="16" viewBox="0 0 18 16"><circle cx="7" cy="7" r="4.5" fill="none" stroke="#888" stroke-width="1.3"/><path d="M10.3 10.3 L14 14" stroke="#888" stroke-width="1.6"/></svg>
<div style="position:absolute;top:1007.0px;font-size:13px;line-height:16px;color:#777;white-space:nowrap;left:33px;">Zu suchender Typ (Strg+K)</div>
<div style="position:absolute;top:1007.0px;font-size:13px;line-height:16px;color:#000;white-space:nowrap;left:947px;">Koordinate</div>
<div style="position:absolute;left:1010px;top:1004px;width:111px;height:22px;background:#fff;border:1px solid #7a7a7a;box-sizing:border-box;"></div>
<div style="position:absolute;top:1007.0px;font-size:13px;line-height:16px;color:#000;white-space:nowrap;left:1017px;">473557,5397760</div>
<svg style="position:absolute;left:1122px;top:1003px;" width="24" height="24" viewBox="0 0 24 24"><ellipse cx="10" cy="10" rx="6" ry="8" fill="#444" transform="rotate(-30 10 10)"/><path d="M8 5 L12 12" stroke="#fff" stroke-width="1"/><circle cx="13" cy="16" r="4" fill="#fff" stroke="#333"/><path d="M18 4 L20 2 M19 9 L22 8" stroke="#333"/></svg>
<div style="position:absolute;top:1007.0px;font-size:13px;line-height:16px;color:#000;white-space:nowrap;left:1157px;">Maßstab</div>
<div style="position:absolute;left:1208px;top:1004px;width:91px;height:22px;background:#fff;border:1px solid #7a7a7a;box-sizing:border-box;"></div>
<div style="position:absolute;top:1007.0px;font-size:13px;line-height:16px;color:#000;white-space:nowrap;left:1213px;">1:6000</div>
<svg style="position:absolute;left:1280px;top:1009px;" width="16" height="12" viewBox="0 0 16 12"><path d="M2 3 L8 9 L14 3" stroke="#444" stroke-width="1.1" fill="none"/></svg>
<svg style="position:absolute;left:1309px;top:1004px;" width="18" height="22" viewBox="0 0 18 22"><path d="M4.5 10 V7 A4.5 4.5 0 0 1 13.5 7 V10" stroke="#777" stroke-width="2" fill="none"/><rect x="2.5" y="10" width="13" height="10" rx="1" fill="#777"/></svg>
<div style="position:absolute;top:1007.0px;font-size:13px;line-height:16px;color:#000;white-space:nowrap;left:1335px;">Vergrößerung</div>
<div style="position:absolute;left:1417px;top:1004px;width:87px;height:22px;background:#fff;border:1px solid #7a7a7a;box-sizing:border-box;"></div>
<div style="position:absolute;top:1007.0px;font-size:13px;line-height:16px;color:#000;white-space:nowrap;left:1420px;">100%</div>
<svg style="position:absolute;left:1487px;top:1006px;" width="15" height="18" viewBox="0 0 15 18"><path d="M3 7.5 L7.5 3 L12 7.5 Z M3 10.5 L7.5 15 L12 10.5 Z" fill="#222"/></svg>
<div style="position:absolute;top:1007.0px;font-size:13px;line-height:16px;color:#000;white-space:nowrap;left:1513px;">Drehung</div>
<div style="position:absolute;left:1570px;top:1004px;width:85px;height:22px;background:#fff;border:1px solid #7a7a7a;box-sizing:border-box;"></div>
<div style="position:absolute;top:1007.0px;font-size:13px;line-height:16px;color:#000;white-space:nowrap;left:1574px;">0,0 °</div>
<svg style="position:absolute;left:1638px;top:1006px;" width="15" height="18" viewBox="0 0 15 18"><path d="M3 7.5 L7.5 3 L12 7.5 Z M3 10.5 L7.5 15 L12 10.5 Z" fill="#222"/></svg>
<svg style="position:absolute;left:1661px;top:1007px;" width="17" height="17" viewBox="0 0 17 17"><rect x="0.5" y="0.5" width="15" height="15" fill="#fff" stroke="#333"/><path d="M3.5 8 L6.5 11.5 L12.5 4" stroke="#222" stroke-width="1.2" fill="none"/></svg>
<div style="position:absolute;top:1007.0px;font-size:13px;line-height:16px;color:#000;white-space:nowrap;left:1683px;">Zeichnen</div>
<svg style="position:absolute;left:1751px;top:1005px;" width="20" height="20" viewBox="0 0 20 20"><circle cx="10" cy="10" r="8" fill="none" stroke="#777" stroke-width="1.4"/><path d="M2 10 H18 M10 2 V18 M4 6 H16 M4 14 H16" stroke="#777" stroke-width="1"/><ellipse cx="10" cy="10" rx="4" ry="8" fill="none" stroke="#777"/></svg>
<div style="position:absolute;top:1007.0px;font-size:13px;line-height:16px;color:#000;white-space:nowrap;left:1775px;">EPSG:25832</div>
<svg style="position:absolute;left:1862px;top:1005px;" width="22" height="22" viewBox="0 0 22 22"><path d="M11 2 C17 2 21 5 21 9.5 C21 14 17 17 11 17 C10 17 9 17 8 16.8 L4 20 L5 15.5 C2.5 14 1 12 1 9.5 C1 5 5 2 11 2 Z" fill="#666"/><circle cx="7" cy="9.5" r="1.3" fill="#fff"/><circle cx="11" cy="9.5" r="1.3" fill="#fff"/><circle cx="15" cy="9.5" r="1.3" fill="#fff"/></svg>
<svg style="position:absolute;left:1896px;top:1004px;" width="24" height="24" viewBox="0 0 24 24"><path d="M3 4 H10 V2 C10 0 13 0 13 2 V4 H17 V10 C19 9 21 11 19 13 C17 14 17 14 17 14 V20 H3 Z" fill="#c8c8c8" stroke="#888" stroke-width="0.8"/><path d="M7 12 L14 8" stroke="#555" stroke-width="1.2"/></svg>
</body></html>
